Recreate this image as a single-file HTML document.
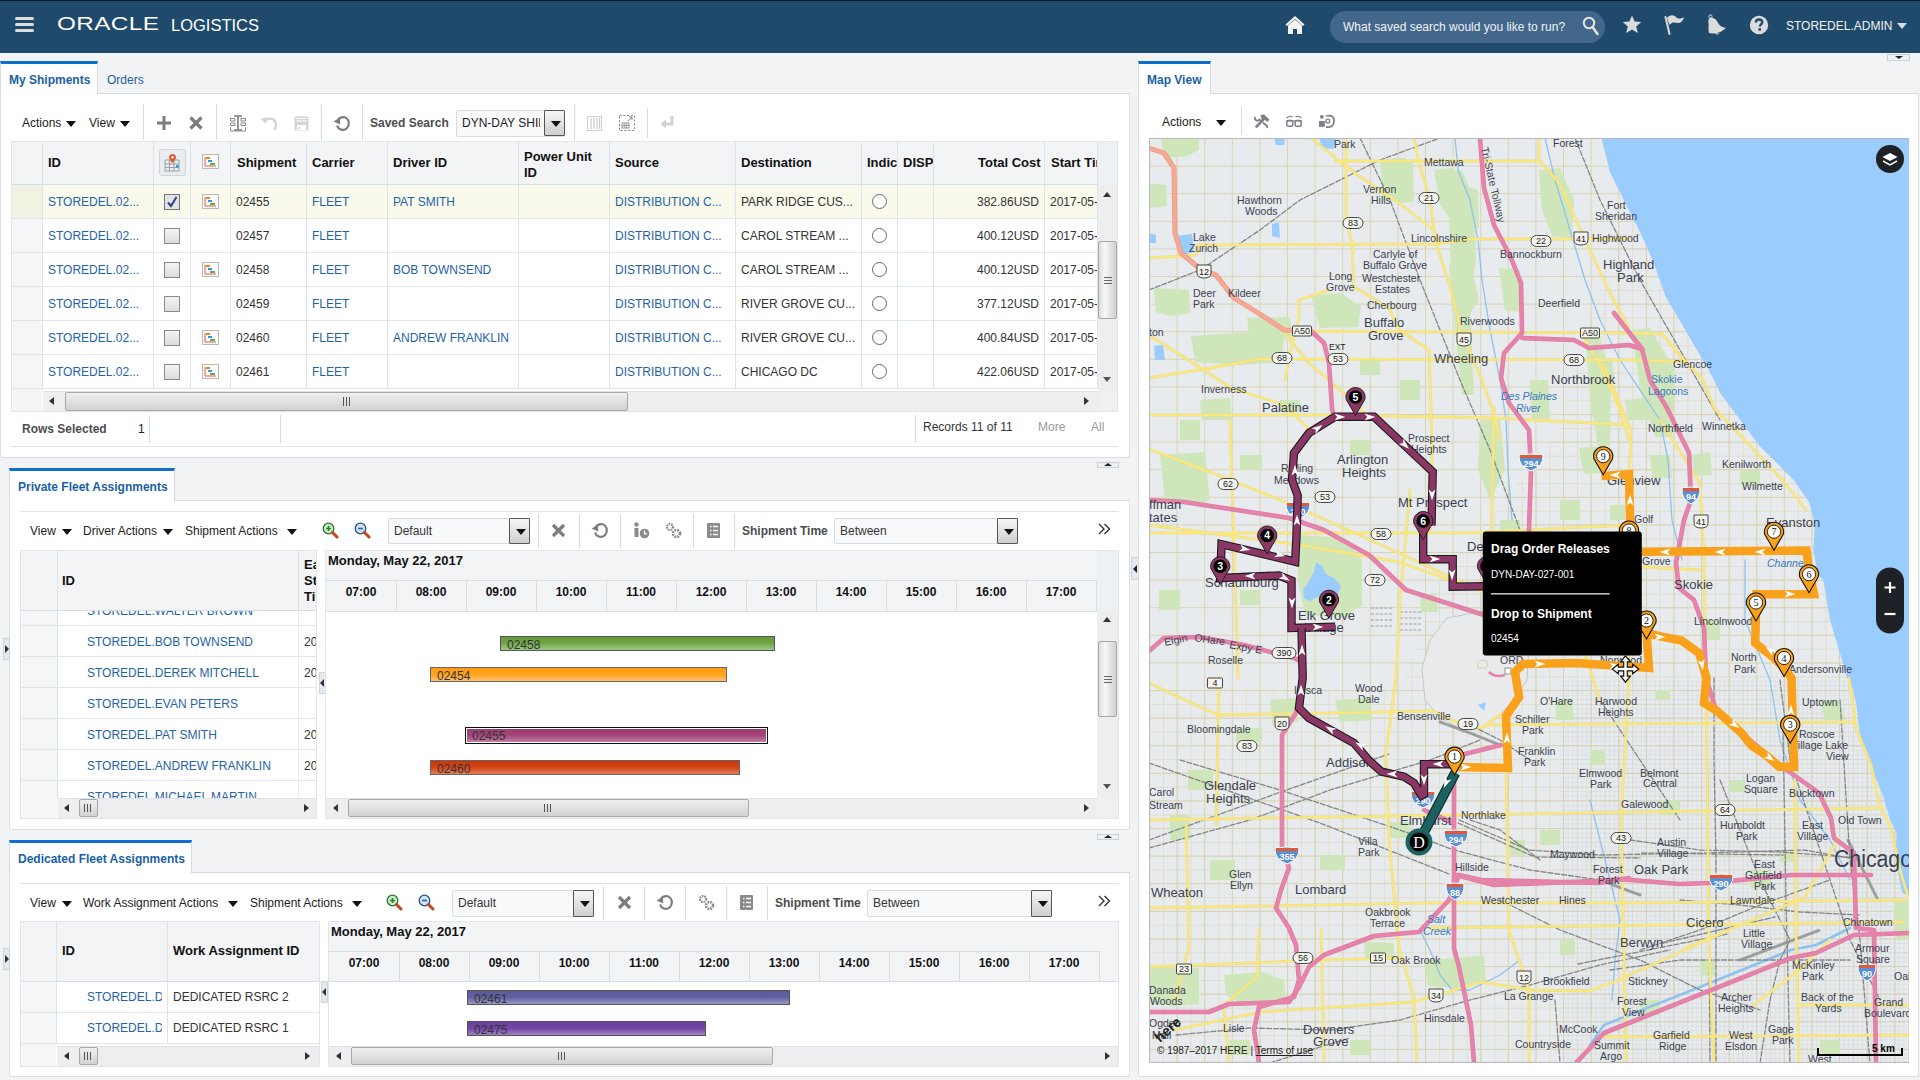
<!DOCTYPE html>
<html><head><meta charset="utf-8">
<style>
*{box-sizing:border-box;margin:0;padding:0}
html,body{width:1920px;height:1080px;overflow:hidden}
body{font-family:"Liberation Sans",sans-serif;font-size:12px;color:#333;background:#f1f3f4;position:relative}
.a{position:absolute}
.t{position:absolute;white-space:nowrap;line-height:14px}
.b{font-weight:bold}
.lnk{color:#1f63a8}
.hdr{left:0;top:0;width:1920px;height:53px;background:#1f4a6c;border-top:1px solid #0d1a26}
.panel{position:absolute;background:#fff;border:1px solid #d9e0e6;border-radius:3px}
.tab{position:absolute;background:#fff;border-left:1px solid #d4dce3;border-right:1px solid #d4dce3;border-top:3px solid #0f6fd0}
.tabt{color:#1a5fa5;font-weight:bold;font-size:12px}
.sep{position:absolute;width:1px;background:#d3dbe2}
.hl{position:absolute;height:1px;background:#dfe6ec}
.vl{position:absolute;width:1px;background:#dfe6ec}
.th{position:absolute;background:#f2f4f6}
.cb{position:absolute;width:15px;height:15px;border:1px solid #8a8a8a;background:linear-gradient(#f4f4f4,#dcdcdc)}
.rad{position:absolute;width:15px;height:15px;border:1.5px solid #666;border-radius:50%;background:#fff}
.dd{position:absolute;border:1px solid #d5dde3;background:#f8f9fa;border-radius:2px}
.ddb{position:absolute;border:1px solid #555;background:linear-gradient(#f6f6f6,#cfcfcf);border-radius:1px}
.ddb:after{content:"";position:absolute;left:6px;top:10px;border-left:5px solid transparent;border-right:5px solid transparent;border-top:6px solid #111}
.car{position:absolute;width:0;height:0;border-left:5px solid transparent;border-right:5px solid transparent;border-top:6px solid #111}
.hs{position:absolute;background:#eceeef;border-top:1px solid #e0e4e7}
.thumb{position:absolute;border:1px solid #a8a8a8;background:linear-gradient(#efefef,#d2d2d2);border-radius:2px}
.gbar{position:absolute;height:15px;border:1px solid #666;font-size:12px;line-height:16px;padding-left:6px;color:#333;overflow:hidden}
.rowh{position:absolute;background:#f3f5f6}
</style></head><body>
<!-- HEADER -->
<div class="a hdr"></div>
<div class="a" style="left:15px;top:17px;width:19px;height:3px;background:#ddd;border-radius:2px"></div>
<div class="a" style="left:15px;top:23px;width:19px;height:3px;background:#ddd;border-radius:2px"></div>
<div class="a" style="left:15px;top:29px;width:19px;height:3px;background:#ddd;border-radius:2px"></div>
<div class="t" style="left:57px;top:15px;font-size:18px;line-height:18px;color:#fff;transform:scaleX(1.35);transform-origin:0 0;letter-spacing:0.3px">ORACLE</div>
<div class="t" style="left:171px;top:16px;font-size:16.5px;line-height:18px;color:#fff">LOGISTICS</div>

<svg class="a" style="left:1284px;top:15px" width="22" height="20" viewBox="0 0 22 20"><path d="M11 1 L1.5 9.5 L3 11 L11 4 L19 11 L20.5 9.5 Z" fill="#f2f2f2"/><path d="M4 10.5 L11 4.5 L18 10.5 V19 H13 V14 H9 V19 H4 Z" fill="#f2f2f2"/></svg>
<div class="a" style="left:1330px;top:11px;width:275px;height:32px;border-radius:16px;background:#43678a"></div>
<div class="t" style="left:1343px;top:19px;font-size:12px;line-height:16px;color:#f0f3f6">What saved search would you like to run?</div>
<svg class="a" style="left:1582px;top:16px" width="18" height="20" viewBox="0 0 18 20"><circle cx="7" cy="7" r="5.2" fill="none" stroke="#e6e6e6" stroke-width="2"/><path d="M10.5 11 L15.5 18" stroke="#e6e6e6" stroke-width="2.4" stroke-linecap="round"/></svg>
<svg class="a" style="left:1622px;top:15px" width="20" height="19" viewBox="0 0 20 19"><path d="M10 0.5 L12.6 6.6 L19.2 7.1 L14.2 11.4 L15.8 18 L10 14.4 L4.2 18 L5.8 11.4 L0.8 7.1 L7.4 6.6 Z" fill="#dcdcdc"/></svg>
<svg class="a" style="left:1664px;top:14px" width="22" height="21" viewBox="0 0 22 21"><path d="M1.5 3 L5.5 20" stroke="#dcdcdc" stroke-width="2" stroke-linecap="round"/><path d="M3 4 C6 0 10 1 12 3 C14 5 17 5 20 3 C19 7 17 9 14 9 C11 9 9 7 5.5 11 Z" fill="#dcdcdc"/></svg>
<svg class="a" style="left:1707px;top:14px" width="21" height="21" viewBox="0 0 21 21"><circle cx="3.5" cy="2.5" r="1.6" fill="none" stroke="#dcdcdc" stroke-width="1"/><path d="M3 4 C6 3 9 5 10.5 8 C12 11 14 13 19 14 L15 17 C12 19 6 20 2 19 C1 15 2 12 1.5 9 C1.2 6 1.5 4.5 3 4 Z" fill="#dcdcdc"/><path d="M8 19 C9 20.5 11 20.5 12 19" stroke="#dcdcdc" fill="none"/></svg>
<svg class="a" style="left:1749px;top:15px" width="20" height="20" viewBox="0 0 20 20"><circle cx="10" cy="10" r="9.2" fill="#dcdcdc"/><path d="M6.8 7.6 C6.8 5.5 8.2 4.5 10 4.5 C12 4.5 13.3 5.7 13.3 7.3 C13.3 9.2 10.8 9.5 10.8 11.6" fill="none" stroke="#1f496d" stroke-width="2.3"/><rect x="9.4" y="13.2" width="2.6" height="2.5" fill="#1f496d"/></svg>
<div class="t" style="left:1786px;top:18px;font-size:12px;line-height:16px;color:#f2f2f2">STOREDEL.ADMIN</div>
<div class="a" style="left:1897px;top:23px;width:0;height:0;border-left:5px solid transparent;border-right:5px solid transparent;border-top:6px solid #dcdcdc"></div>
<div class="panel" style="left:0;top:93px;width:1130px;height:365px;border-top:none"></div>
<div class="hl" style="left:98px;top:93px;width:1032px;background:#d4dce3"></div>
<div class="tab" style="left:0;top:61px;width:98px;height:33px"></div>
<div class="t tabt" style="left:9px;top:73px">My Shipments</div>
<div class="t" style="left:107px;top:73px;color:#1a5fa5">Orders</div>
<div class="t" style="left:22px;top:116px;color:#222">Actions</div><div class="car" style="left:66px;top:121px"></div>
<div class="t" style="left:89px;top:116px;color:#222">View</div><div class="car" style="left:120px;top:121px"></div>
<div class="sep" style="left:143px;top:104px;height:36px"></div>
<div class="sep" style="left:216px;top:104px;height:36px"></div>
<div class="sep" style="left:321px;top:104px;height:36px"></div>
<div class="sep" style="left:362px;top:104px;height:36px"></div>
<svg class="a" style="left:157px;top:116px" width="14" height="14" viewBox="0 0 14 14"><path d="M5.5 0 H8.5 V5.5 H14 V8.5 H8.5 V14 H5.5 V8.5 H0 V5.5 H5.5 Z" fill="#7d7d7d"/></svg>
<svg class="a" style="left:189px;top:116px" width="14" height="14" viewBox="0 0 14 14"><path d="M1.5 1.5 L12.5 12.5 M12.5 1.5 L1.5 12.5" stroke="#7d7d7d" stroke-width="3.2"/></svg>
<svg class="a" style="left:230px;top:115px" width="16" height="17" viewBox="0 0 16 17"><path d="M4 1 H12 M8 1 V15 M4 15 H12" stroke="#7d7d7d" stroke-width="1.6" fill="none"/><path d="M0.5 3.5 H5 V6 H0.5 Z M11 3.5 H15.5 V6 H11 Z M0.5 8 H5 V10.5 H0.5 Z M11 8 H15.5 V10.5 H11 Z M0.5 12.5 V16 H15.5 V12.5" stroke="#8a8a8a" stroke-width="1" fill="none"/></svg>
<svg class="a" style="left:261px;top:116px" width="17" height="15" viewBox="0 0 17 15"><path d="M4 5 C8 1 15 2 15 9 C15 11 14 13 13 14" fill="none" stroke="#d2d2d2" stroke-width="2.2"/><path d="M0 3 L6 1 L5 8 Z" fill="#d2d2d2"/></svg>
<svg class="a" style="left:294px;top:116px" width="15" height="15" viewBox="0 0 15 15"><rect x="0.5" y="0.5" width="14" height="14" rx="1" fill="#d5d5d5"/><rect x="2.5" y="2" width="10" height="1" fill="#fff"/><rect x="2.5" y="4.5" width="10" height="1" fill="#fff"/><rect x="3" y="9" width="9" height="5" fill="#fff"/><rect x="4" y="11" width="2" height="2" fill="#d5d5d5"/></svg>
<svg class="a" style="left:333px;top:115px" width="18" height="17" viewBox="0 0 18 17"><path d="M4.5 5.5 C6 3 8 2.2 10 2.2 C13.5 2.2 15.8 5 15.8 8.5 C15.8 12 13 14.8 9.8 14.8 C7 14.8 4.8 13 4.2 10.5" fill="none" stroke="#7d7d7d" stroke-width="2.2"/><path d="M0.5 6.5 L7 2.8 L7.2 9.5 Z" fill="#7d7d7d"/></svg>
<div class="t b" style="left:370px;top:116px;color:#4d4d4d">Saved Search</div>
<div class="dd" style="left:456px;top:110px;width:109px;height:27px"></div>
<div class="t" style="left:462px;top:116px;color:#222;width:78px;overflow:hidden">DYN-DAY SHIPMENTS</div>
<div class="ddb" style="left:544px;top:110px;width:21px;height:26px"></div>
<div class="sep" style="left:574px;top:104px;height:36px"></div>
<div class="sep" style="left:647px;top:108px;height:30px"></div>
<svg class="a" style="left:587px;top:116px" width="15" height="15" viewBox="0 0 15 15"><rect x="0.5" y="0.5" width="14" height="14" fill="none" stroke="#d0d0d0"/><path d="M4 2 V13 M7 2 V13 M10 2 V13 M12.5 2 V13" stroke="#d0d0d0" stroke-width="1.3"/></svg>
<svg class="a" style="left:619px;top:114px" width="16" height="17" viewBox="0 0 16 17"><rect x="0.5" y="1.5" width="15" height="15" fill="none" stroke="#8a8a8a" stroke-dasharray="2.2 1.6"/><path d="M9 7 L13 3 M10 3 H13 V6" stroke="#8a8a8a" fill="none"/><rect x="3" y="9" width="7" height="5" fill="none" stroke="#8a8a8a" stroke-width="0.9"/><path d="M3 11.5 H10 M5.3 9 V14 M7.6 9 V14" stroke="#8a8a8a" stroke-width="0.8"/></svg>
<svg class="a" style="left:660px;top:115px" width="15" height="15" viewBox="0 0 15 15"><path d="M10.5 1 H13.5 V10.5 H6 V13.5 L0.5 9 L6 4.5 V7.5 H10.5 Z" fill="#d2d2d2"/></svg>
<div class="a" style="left:11px;top:141px;width:1107px;height:271px;border:1px solid #dfe6ec;background:#fff"></div>
<div class="th" style="left:12px;top:142px;width:1086px;height:43px"></div>
<div class="rowh" style="left:12px;top:185px;width:30px;height:226px;background:#f4f6f7"></div>
<div class="a" style="left:12px;top:185px;width:30px;height:33px;background:#f2f2e2"></div>
<div class="a" style="left:42px;top:185px;width:1056px;height:33px;background:#f9f9ec"></div>
<div class="vl" style="left:42px;top:142px;height:247px;background:#dce3e9"></div>
<div class="vl" style="left:153px;top:142px;height:247px;background:#dce3e9"></div>
<div class="vl" style="left:190px;top:142px;height:247px;background:#dce3e9"></div>
<div class="vl" style="left:230px;top:142px;height:247px;background:#dce3e9"></div>
<div class="vl" style="left:306px;top:142px;height:247px;background:#dce3e9"></div>
<div class="vl" style="left:387px;top:142px;height:247px;background:#dce3e9"></div>
<div class="vl" style="left:518px;top:142px;height:247px;background:#dce3e9"></div>
<div class="vl" style="left:609px;top:142px;height:247px;background:#dce3e9"></div>
<div class="vl" style="left:735px;top:142px;height:247px;background:#dce3e9"></div>
<div class="vl" style="left:861px;top:142px;height:247px;background:#dce3e9"></div>
<div class="vl" style="left:897px;top:142px;height:247px;background:#dce3e9"></div>
<div class="vl" style="left:933px;top:142px;height:247px;background:#dce3e9"></div>
<div class="vl" style="left:1044px;top:142px;height:247px;background:#dce3e9"></div>
<div class="vl" style="left:1097px;top:142px;height:247px;background:#dce3e9"></div>
<div class="hl" style="left:12px;top:184px;width:1086px;background:#d6dee5"></div>
<div class="hl" style="left:12px;top:218px;width:1086px"></div>
<div class="hl" style="left:12px;top:252px;width:1086px"></div>
<div class="hl" style="left:12px;top:286px;width:1086px"></div>
<div class="hl" style="left:12px;top:320px;width:1086px"></div>
<div class="hl" style="left:12px;top:354px;width:1086px"></div>
<div class="hl" style="left:12px;top:388px;width:1086px"></div>
<div class="t b" style="left:48px;top:156px;font-size:13px;color:#111">ID</div>
<div class="a" style="left:159px;top:149px;width:27px;height:27px;border:1px solid #cfd5da;border-radius:3px;background:#e9edf0"></div>
<svg class="a" style="left:164px;top:153px" width="17" height="19" viewBox="0 0 17 19"><path d="M1 7 H15 V18 H1 Z M1 11 H15 M1 14.5 H15 M5.5 7 V18 M10 7 V18" stroke="#9aa0a6" stroke-width="1" fill="none"/><path d="M8.5 1 C6.3 1 5 2.5 5 4.2 C5 6.5 8.5 10 8.5 10 C8.5 10 12 6.5 12 4.2 C12 2.5 10.7 1 8.5 1 Z" fill="#e2582e"/><circle cx="8.5" cy="4.2" r="1.2" fill="#fff"/><rect x="12" y="12" width="2.5" height="2.5" fill="#2a9be0"/></svg>
<svg class="a" style="left:202px;top:154px" width="17" height="15" viewBox="0 0 17 15"><rect x="0.5" y="0.5" width="16" height="14" fill="#fafafa" stroke="#b9b9b9"/><path d="M3 3 V12 H14" fill="none" stroke="#e25a3c" stroke-width="1"/><rect x="4" y="3" width="4" height="2" fill="#e08a1e"/><rect x="6" y="6" width="4" height="2" fill="#2a9be0"/><rect x="8" y="9" width="5" height="2" fill="#6aa84f"/></svg>
<div class="t b" style="left:237px;top:156px;font-size:13px;color:#111">Shipment</div>
<div class="t b" style="left:312px;top:156px;font-size:13px;color:#111">Carrier</div>
<div class="t b" style="left:393px;top:156px;font-size:13px;color:#111">Driver ID</div>
<div class="t b" style="left:524px;top:149px;font-size:13px;color:#111;line-height:16px">Power Unit<br>ID</div>
<div class="t b" style="left:615px;top:156px;font-size:13px;color:#111">Source</div>
<div class="t b" style="left:741px;top:156px;font-size:13px;color:#111">Destination</div>
<div class="t b" style="left:867px;top:156px;font-size:13px;color:#111;width:30px;overflow:hidden">Indicator</div>
<div class="t b" style="left:903px;top:156px;font-size:13px;color:#111;width:30px;overflow:hidden">DISP</div>
<div class="t b" style="left:978px;top:156px;font-size:13px;color:#111">Total Cost</div>
<div class="t b" style="left:1051px;top:156px;font-size:13px;color:#111;width:46px;overflow:hidden">Start Time</div>
<div class="t lnk" style="left:48px;top:195px">STOREDEL.02...</div>
<svg class="a" style="left:164px;top:194px" width="16" height="16" viewBox="0 0 16 16"><rect x="0.5" y="0.5" width="15" height="15" fill="#e3e3e3" stroke="#777"/><path d="M4 8.5 L7 12 L12.5 3" fill="none" stroke="#2b3f8f" stroke-width="2"/></svg>
<svg class="a" style="left:202px;top:194px" width="17" height="15" viewBox="0 0 17 15"><rect x="0.5" y="0.5" width="16" height="14" fill="#fafafa" stroke="#b9b9b9"/><path d="M3 3 V12 H14" fill="none" stroke="#e25a3c" stroke-width="1"/><rect x="4" y="3" width="4" height="2" fill="#e08a1e"/><rect x="6" y="6" width="4" height="2" fill="#2a9be0"/><rect x="8" y="9" width="5" height="2" fill="#6aa84f"/></svg>
<div class="t" style="left:236px;top:195px;color:#333">02455</div>
<div class="t lnk" style="left:312px;top:195px">FLEET</div>
<div class="t lnk" style="left:393px;top:195px">PAT SMITH</div>
<div class="t lnk" style="left:615px;top:195px">DISTRIBUTION C...</div>
<div class="t" style="left:741px;top:195px;color:#333">PARK RIDGE CUS...</div>
<div class="rad" style="left:872px;top:194px;width:15px;height:15px"></div>
<div class="t" style="left:973px;top:195px;color:#333;width:66px;text-align:right">382.86USD</div>
<div class="t" style="left:1050px;top:195px;color:#333;width:47px;overflow:hidden">2017-05-22</div>
<div class="t lnk" style="left:48px;top:229px">STOREDEL.02...</div>
<div class="cb" style="left:164px;top:228px;width:16px;height:16px"></div>
<div class="t" style="left:236px;top:229px;color:#333">02457</div>
<div class="t lnk" style="left:312px;top:229px">FLEET</div>
<div class="t lnk" style="left:615px;top:229px">DISTRIBUTION C...</div>
<div class="t" style="left:741px;top:229px;color:#333">CAROL STREAM ...</div>
<div class="rad" style="left:872px;top:228px;width:15px;height:15px"></div>
<div class="t" style="left:973px;top:229px;color:#333;width:66px;text-align:right">400.12USD</div>
<div class="t" style="left:1050px;top:229px;color:#333;width:47px;overflow:hidden">2017-05-22</div>
<div class="t lnk" style="left:48px;top:263px">STOREDEL.02...</div>
<div class="cb" style="left:164px;top:262px;width:16px;height:16px"></div>
<svg class="a" style="left:202px;top:262px" width="17" height="15" viewBox="0 0 17 15"><rect x="0.5" y="0.5" width="16" height="14" fill="#fafafa" stroke="#b9b9b9"/><path d="M3 3 V12 H14" fill="none" stroke="#e25a3c" stroke-width="1"/><rect x="4" y="3" width="4" height="2" fill="#e08a1e"/><rect x="6" y="6" width="4" height="2" fill="#2a9be0"/><rect x="8" y="9" width="5" height="2" fill="#6aa84f"/></svg>
<div class="t" style="left:236px;top:263px;color:#333">02458</div>
<div class="t lnk" style="left:312px;top:263px">FLEET</div>
<div class="t lnk" style="left:393px;top:263px">BOB TOWNSEND</div>
<div class="t lnk" style="left:615px;top:263px">DISTRIBUTION C...</div>
<div class="t" style="left:741px;top:263px;color:#333">CAROL STREAM ...</div>
<div class="rad" style="left:872px;top:262px;width:15px;height:15px"></div>
<div class="t" style="left:973px;top:263px;color:#333;width:66px;text-align:right">400.12USD</div>
<div class="t" style="left:1050px;top:263px;color:#333;width:47px;overflow:hidden">2017-05-22</div>
<div class="t lnk" style="left:48px;top:297px">STOREDEL.02...</div>
<div class="cb" style="left:164px;top:296px;width:16px;height:16px"></div>
<div class="t" style="left:236px;top:297px;color:#333">02459</div>
<div class="t lnk" style="left:312px;top:297px">FLEET</div>
<div class="t lnk" style="left:615px;top:297px">DISTRIBUTION C...</div>
<div class="t" style="left:741px;top:297px;color:#333">RIVER GROVE CU...</div>
<div class="rad" style="left:872px;top:296px;width:15px;height:15px"></div>
<div class="t" style="left:973px;top:297px;color:#333;width:66px;text-align:right">377.12USD</div>
<div class="t" style="left:1050px;top:297px;color:#333;width:47px;overflow:hidden">2017-05-22</div>
<div class="t lnk" style="left:48px;top:331px">STOREDEL.02...</div>
<div class="cb" style="left:164px;top:330px;width:16px;height:16px"></div>
<svg class="a" style="left:202px;top:330px" width="17" height="15" viewBox="0 0 17 15"><rect x="0.5" y="0.5" width="16" height="14" fill="#fafafa" stroke="#b9b9b9"/><path d="M3 3 V12 H14" fill="none" stroke="#e25a3c" stroke-width="1"/><rect x="4" y="3" width="4" height="2" fill="#e08a1e"/><rect x="6" y="6" width="4" height="2" fill="#2a9be0"/><rect x="8" y="9" width="5" height="2" fill="#6aa84f"/></svg>
<div class="t" style="left:236px;top:331px;color:#333">02460</div>
<div class="t lnk" style="left:312px;top:331px">FLEET</div>
<div class="t lnk" style="left:393px;top:331px">ANDREW FRANKLIN</div>
<div class="t lnk" style="left:615px;top:331px">DISTRIBUTION C...</div>
<div class="t" style="left:741px;top:331px;color:#333">RIVER GROVE CU...</div>
<div class="rad" style="left:872px;top:330px;width:15px;height:15px"></div>
<div class="t" style="left:973px;top:331px;color:#333;width:66px;text-align:right">400.84USD</div>
<div class="t" style="left:1050px;top:331px;color:#333;width:47px;overflow:hidden">2017-05-22</div>
<div class="t lnk" style="left:48px;top:365px">STOREDEL.02...</div>
<div class="cb" style="left:164px;top:364px;width:16px;height:16px"></div>
<svg class="a" style="left:202px;top:364px" width="17" height="15" viewBox="0 0 17 15"><rect x="0.5" y="0.5" width="16" height="14" fill="#fafafa" stroke="#b9b9b9"/><path d="M3 3 V12 H14" fill="none" stroke="#e25a3c" stroke-width="1"/><rect x="4" y="3" width="4" height="2" fill="#e08a1e"/><rect x="6" y="6" width="4" height="2" fill="#2a9be0"/><rect x="8" y="9" width="5" height="2" fill="#6aa84f"/></svg>
<div class="t" style="left:236px;top:365px;color:#333">02461</div>
<div class="t lnk" style="left:312px;top:365px">FLEET</div>
<div class="t lnk" style="left:615px;top:365px">DISTRIBUTION C...</div>
<div class="t" style="left:741px;top:365px;color:#333">CHICAGO DC</div>
<div class="rad" style="left:872px;top:364px;width:15px;height:15px"></div>
<div class="t" style="left:973px;top:365px;color:#333;width:66px;text-align:right">422.06USD</div>
<div class="t" style="left:1050px;top:365px;color:#333;width:47px;overflow:hidden">2017-05-22</div>
<div class="a" style="left:1098px;top:142px;width:19px;height:43px;background:#eef1f3"></div>
<div class="a" style="left:1098px;top:185px;width:19px;height:205px;background:#eceeef"></div>
<div class="a" style="left:1103px;top:192px;width:0;height:0;border-left:4px solid transparent;border-right:4px solid transparent;border-bottom:5px solid #333"></div>
<div class="a" style="left:1103px;top:377px;width:0;height:0;border-left:4px solid transparent;border-right:4px solid transparent;border-top:5px solid #555"></div>
<div class="thumb" style="left:1098px;top:241px;width:19px;height:78px;background:linear-gradient(to right,#dcdcdc,#f8f8f8 35%,#d0d0d0)"></div><div class="a" style="left:1098px;top:390px;width:19px;height:21px;background:#eef0f1"></div>
<div class="a" style="left:1104px;top:277px;width:8px;height:1px;background:#666;box-shadow:0 3px 0 #666,0 6px 0 #666"></div>
<div class="a" style="left:12px;top:389px;width:30px;height:22px;background:#f3f5f6"></div>
<div class="hs" style="left:43px;top:391px;width:1055px;height:20px"></div>
<div class="a" style="left:49px;top:397px;width:0;height:0;border-top:4px solid transparent;border-bottom:4px solid transparent;border-right:5px solid #333"></div>
<div class="a" style="left:1084px;top:397px;width:0;height:0;border-top:4px solid transparent;border-bottom:4px solid transparent;border-left:5px solid #333"></div>
<div class="thumb" style="left:65px;top:392px;width:563px;height:19px"></div>
<div class="a" style="left:343px;top:397px;width:1px;height:9px;background:#555;box-shadow:3px 0 0 #555,6px 0 0 #555"></div>
<div class="t b" style="left:22px;top:422px;color:#4d4d4d">Rows Selected</div>
<div class="t" style="left:138px;top:422px;color:#222">1</div>
<div class="sep" style="left:149px;top:415px;height:28px"></div>
<div class="sep" style="left:280px;top:415px;height:28px"></div>
<div class="sep" style="left:915px;top:415px;height:28px"></div>
<div class="hl" style="left:11px;top:446px;width:1107px;background:#dde4ea"></div>
<div class="t" style="left:923px;top:420px;color:#333">Records 11 of 11</div>
<div class="t" style="left:1038px;top:420px;color:#9a9a9a">More</div>
<div class="t" style="left:1091px;top:420px;color:#9a9a9a">All</div>
<div class="panel" style="left:9px;top:500px;width:1121px;height:330px;border-top:none"></div>
<div class="hl" style="left:175px;top:500px;width:955px;background:#d4dce3"></div>
<div class="tab" style="left:9px;top:468px;width:166px;height:33px"></div>
<div class="t tabt" style="left:18px;top:480px">Private Fleet Assignments</div>
<div class="hl" style="left:20px;top:511px;width:1099px;background:#dde4ea"></div>
<div class="t" style="left:30px;top:524px;color:#222">View</div><div class="car" style="left:62px;top:529px"></div>
<div class="t" style="left:83px;top:524px;color:#222">Driver Actions</div><div class="car" style="left:163px;top:529px"></div>
<div class="t" style="left:185px;top:524px;color:#222">Shipment Actions</div><div class="car" style="left:287px;top:529px"></div>
<svg class="a" style="left:322px;top:522px" width="17" height="17" viewBox="0 0 17 17"><circle cx="6.5" cy="6.5" r="5.3" fill="#cdeccd" stroke="#2f6f2f" stroke-width="1.3"/><path d="M4 6.5 H9 M6.5 4 V9" stroke="#1a8a1a" stroke-width="1.6"/><path d="M10.5 10.5 L15 15" stroke="#c2461f" stroke-width="3" stroke-linecap="round"/></svg>
<svg class="a" style="left:354px;top:522px" width="17" height="17" viewBox="0 0 17 17"><circle cx="6.5" cy="6.5" r="5.3" fill="#cfe3f3" stroke="#2f4f7f" stroke-width="1.3"/><path d="M4 6.5 H9" stroke="#1a6fb0" stroke-width="1.6"/><path d="M10.5 10.5 L15 15" stroke="#c2461f" stroke-width="3" stroke-linecap="round"/></svg>
<div class="dd" style="left:388px;top:518px;width:142px;height:26px"></div>
<div class="t" style="left:394px;top:524px;color:#333">Default</div>
<div class="ddb" style="left:509px;top:518px;width:21px;height:26px"></div>
<div class="sep" style="left:538px;top:514px;height:34px"></div>
<div class="sep" style="left:579px;top:514px;height:34px"></div>
<div class="sep" style="left:620px;top:514px;height:34px"></div>
<div class="sep" style="left:693px;top:514px;height:34px"></div>
<div class="sep" style="left:734px;top:514px;height:34px"></div>
<svg class="a" style="left:551px;top:523px" width="15" height="15" viewBox="0 0 15 15"><path d="M2 2 L13 13 M13 2 L2 13" stroke="#7d7d7d" stroke-width="3.2"/></svg>
<svg class="a" style="left:591px;top:522px" width="18" height="17" viewBox="0 0 18 17"><path d="M4.5 5.5 C6 3 8 2.2 10 2.2 C13.5 2.2 15.8 5 15.8 8.5 C15.8 12 13 14.8 9.8 14.8 C7 14.8 4.8 13 4.2 10.5" fill="none" stroke="#7d7d7d" stroke-width="2.2"/><path d="M0.5 6.5 L7 2.8 L7.2 9.5 Z" fill="#7d7d7d"/></svg>
<svg class="a" style="left:633px;top:522px" width="17" height="17" viewBox="0 0 17 17"><circle cx="3.5" cy="2.5" r="2.2" fill="#8a8a8a"/><rect x="1.5" y="6" width="4" height="9" fill="#8a8a8a"/><circle cx="11.5" cy="11.5" r="4.8" fill="#8a8a8a"/><path d="M11.5 8.5 V11.8 H14" stroke="#fff" stroke-width="1.3" fill="none"/></svg>
<svg class="a" style="left:665px;top:522px" width="17" height="17" viewBox="0 0 17 17"><circle cx="5" cy="5" r="3" fill="none" stroke="#8a8a8a" stroke-width="2.2" stroke-dasharray="1.6 0.9"/><circle cx="11.5" cy="11.5" r="3.5" fill="none" stroke="#8a8a8a" stroke-width="2.6" stroke-dasharray="1.8 1"/></svg>
<svg class="a" style="left:707px;top:523px" width="13" height="15" viewBox="0 0 13 15"><rect x="0" y="0" width="13" height="15" rx="1" fill="#8a8a8a"/><path d="M3 3.5 H4.5 M6 3.5 H11 M3 7.5 H4.5 M6 7.5 H11 M3 11.5 H4.5 M6 11.5 H11" stroke="#fff" stroke-width="1.5"/></svg>
<div class="t b" style="left:742px;top:524px;color:#4d4d4d">Shipment Time</div>
<div class="dd" style="left:834px;top:518px;width:184px;height:26px"></div>
<div class="t" style="left:840px;top:524px;color:#333">Between</div>
<div class="ddb" style="left:997px;top:518px;width:21px;height:26px"></div>
<svg class="a" style="left:1098px;top:523px" width="13" height="12" viewBox="0 0 13 12"><path d="M1 1 L6 6 L1 11 M6.5 1 L11.5 6 L6.5 11" fill="none" stroke="#333" stroke-width="1.4"/></svg>
<div class="a" style="left:20px;top:550px;width:297px;height:269px;border:1px solid #dfe6ec;background:#fff"></div>
<div class="th" style="left:21px;top:551px;width:295px;height:59px"></div>
<div class="rowh" style="left:21px;top:610px;width:36px;height:208px;background:#f4f6f7"></div>
<div class="vl" style="left:57px;top:551px;height:247px;background:#dce3e9"></div>
<div class="vl" style="left:298px;top:551px;height:247px;background:#dce3e9"></div>
<div class="hl" style="left:21px;top:610px;width:295px;background:#d6dee5"></div>
<div class="t b" style="left:62px;top:574px;font-size:13px;color:#111">ID</div>
<div class="a" style="left:303px;top:557px;width:13px;height:50px;overflow:hidden"><div class="t b" style="left:1px;top:0;font-size:13px;line-height:16px;color:#111">Ea<br>St<br>Ti</div></div>
<div class="a" style="left:58px;top:611px;width:258px;height:187px;overflow:hidden">
<div class="t lnk" style="left:29px;top:-7px">STOREDEL.WALTER BROWN</div>
<div class="hl" style="left:0;top:14px;width:258px"></div>
<div class="t lnk" style="left:29px;top:24px">STOREDEL.BOB TOWNSEND</div>
<div class="t" style="left:246px;top:24px;color:#333">20</div>
<div class="hl" style="left:0;top:45px;width:258px"></div>
<div class="t lnk" style="left:29px;top:55px">STOREDEL.DEREK MITCHELL</div>
<div class="t" style="left:246px;top:55px;color:#333">20</div>
<div class="hl" style="left:0;top:76px;width:258px"></div>
<div class="t lnk" style="left:29px;top:86px">STOREDEL.EVAN PETERS</div>
<div class="hl" style="left:0;top:107px;width:258px"></div>
<div class="t lnk" style="left:29px;top:117px">STOREDEL.PAT SMITH</div>
<div class="t" style="left:246px;top:117px;color:#333">20</div>
<div class="hl" style="left:0;top:138px;width:258px"></div>
<div class="t lnk" style="left:29px;top:148px">STOREDEL.ANDREW FRANKLIN</div>
<div class="t" style="left:246px;top:148px;color:#333">20</div>
<div class="hl" style="left:0;top:169px;width:258px"></div>
<div class="t lnk" style="left:29px;top:179px">STOREDEL.MICHAEL MARTIN</div>
<div class="hl" style="left:0;top:200px;width:258px"></div>
</div>
<div class="hl" style="left:21px;top:625px;width:36px;background:#e1e6ea"></div>
<div class="hl" style="left:21px;top:656px;width:36px;background:#e1e6ea"></div>
<div class="hl" style="left:21px;top:687px;width:36px;background:#e1e6ea"></div>
<div class="hl" style="left:21px;top:718px;width:36px;background:#e1e6ea"></div>
<div class="hl" style="left:21px;top:749px;width:36px;background:#e1e6ea"></div>
<div class="hl" style="left:21px;top:780px;width:36px;background:#e1e6ea"></div>
<div class="vl" style="left:298px;top:611px;height:187px;background:#e6ebef"></div>
<div class="hs" style="left:58px;top:798px;width:258px;height:20px"></div>
<div class="a" style="left:64px;top:804px;width:0;height:0;border-top:4px solid transparent;border-bottom:4px solid transparent;border-right:5px solid #333"></div>
<div class="a" style="left:304px;top:804px;width:0;height:0;border-top:4px solid transparent;border-bottom:4px solid transparent;border-left:5px solid #333"></div>
<div class="thumb" style="left:79px;top:799px;width:19px;height:18px"></div>
<div class="a" style="left:84px;top:804px;width:1px;height:8px;background:#555;box-shadow:3px 0 0 #555,6px 0 0 #555"></div>
<div class="a" style="left:319px;top:672px;width:7px;height:22px;background:#e6eaee;border:1px solid #cdd5dc"></div>
<div class="a" style="left:320px;top:679px;width:0;height:0;border-top:4px solid transparent;border-bottom:4px solid transparent;border-right:4px solid #333"></div>
<div class="a" style="left:325px;top:550px;width:794px;height:269px;border:1px solid #dfe6ec;background:#fff"></div>
<div class="th" style="left:326px;top:551px;width:792px;height:60px"></div>
<div class="t b" style="left:328px;top:554px;font-size:13px;color:#111">Monday, May 22, 2017</div>
<div class="hl" style="left:326px;top:580px;width:771px;background:#d6dee5"></div>
<div class="hl" style="left:326px;top:611px;width:771px;background:#d6dee5"></div>
<div class="vl" style="left:396px;top:581px;height:30px;background:#d6dee5"></div>
<div class="t b" style="left:326px;top:585px;width:70px;text-align:center;color:#111">07:00</div>
<div class="vl" style="left:466px;top:581px;height:30px;background:#d6dee5"></div>
<div class="t b" style="left:396px;top:585px;width:70px;text-align:center;color:#111">08:00</div>
<div class="vl" style="left:536px;top:581px;height:30px;background:#d6dee5"></div>
<div class="t b" style="left:466px;top:585px;width:70px;text-align:center;color:#111">09:00</div>
<div class="vl" style="left:606px;top:581px;height:30px;background:#d6dee5"></div>
<div class="t b" style="left:536px;top:585px;width:70px;text-align:center;color:#111">10:00</div>
<div class="vl" style="left:676px;top:581px;height:30px;background:#d6dee5"></div>
<div class="t b" style="left:606px;top:585px;width:70px;text-align:center;color:#111">11:00</div>
<div class="vl" style="left:746px;top:581px;height:30px;background:#d6dee5"></div>
<div class="t b" style="left:676px;top:585px;width:70px;text-align:center;color:#111">12:00</div>
<div class="vl" style="left:816px;top:581px;height:30px;background:#d6dee5"></div>
<div class="t b" style="left:746px;top:585px;width:70px;text-align:center;color:#111">13:00</div>
<div class="vl" style="left:886px;top:581px;height:30px;background:#d6dee5"></div>
<div class="t b" style="left:816px;top:585px;width:70px;text-align:center;color:#111">14:00</div>
<div class="vl" style="left:956px;top:581px;height:30px;background:#d6dee5"></div>
<div class="t b" style="left:886px;top:585px;width:70px;text-align:center;color:#111">15:00</div>
<div class="vl" style="left:1026px;top:581px;height:30px;background:#d6dee5"></div>
<div class="t b" style="left:956px;top:585px;width:70px;text-align:center;color:#111">16:00</div>
<div class="vl" style="left:1096px;top:581px;height:30px;background:#d6dee5"></div>
<div class="t b" style="left:1026px;top:585px;width:70px;text-align:center;color:#111">17:00</div>
<div class="a" style="left:1097px;top:551px;width:21px;height:60px;background:#eef1f3"></div>
<div class="a" style="left:1097px;top:611px;width:21px;height:187px;background:#eceeef"></div>
<div class="a" style="left:1103px;top:617px;width:0;height:0;border-left:4px solid transparent;border-right:4px solid transparent;border-bottom:5px solid #333"></div>
<div class="a" style="left:1103px;top:784px;width:0;height:0;border-left:4px solid transparent;border-right:4px solid transparent;border-top:5px solid #555"></div>
<div class="thumb" style="left:1098px;top:641px;width:19px;height:76px;background:linear-gradient(to right,#dcdcdc,#f8f8f8 35%,#d0d0d0)"></div><div class="a" style="left:1097px;top:798px;width:21px;height:20px;background:#eef0f1"></div>
<div class="a" style="left:1104px;top:676px;width:8px;height:1px;background:#666;box-shadow:0 3px 0 #666,0 6px 0 #666"></div>
<div class="hs" style="left:326px;top:798px;width:771px;height:20px"></div>
<div class="a" style="left:333px;top:804px;width:0;height:0;border-top:4px solid transparent;border-bottom:4px solid transparent;border-right:5px solid #333"></div>
<div class="a" style="left:1084px;top:804px;width:0;height:0;border-top:4px solid transparent;border-bottom:4px solid transparent;border-left:5px solid #333"></div>
<div class="thumb" style="left:348px;top:799px;width:401px;height:18px"></div>
<div class="a" style="left:544px;top:804px;width:1px;height:8px;background:#555;box-shadow:3px 0 0 #555,6px 0 0 #555"></div>
<div class="gbar" style="left:500px;top:636px;width:275px;background:linear-gradient(#649c3a,#6ea445 45%,#9fc786);border-color:#555">02458</div>
<div class="gbar" style="left:430px;top:667px;width:297px;background:linear-gradient(#ff9a0e,#ffa41e 50%,#ffc06e);border-color:#666">02454</div>
<div class="gbar" style="left:430px;top:760px;width:310px;background:linear-gradient(#c93608,#d24618 50%,#e57d5c);border-color:#666">02460</div>
<div class="gbar" style="left:465px;top:727px;width:303px;height:17px;border:1.5px solid #111;box-shadow:inset 0 0 0 1px #fff;background:linear-gradient(#9a3a6e,#a2477a 50%,#c88aae);line-height:16px;padding-left:6px">02455</div>
<div class="a" style="left:3px;top:638px;width:7px;height:22px;background:#e6eaee;border:1px solid #cdd5dc"></div>
<div class="a" style="left:5px;top:645px;width:0;height:0;border-top:4px solid transparent;border-bottom:4px solid transparent;border-left:4px solid #333"></div>
<div class="a" style="left:1097px;top:462px;width:22px;height:6px;border:1px solid #c9d1d8;background:#eef1f3"></div><div class="a" style="left:1104px;top:463px;width:0;height:0;border-left:4px solid transparent;border-right:4px solid transparent;border-bottom:3px solid #222"></div>
<div class="a" style="left:1097px;top:834px;width:22px;height:6px;border:1px solid #c9d1d8;background:#eef1f3"></div><div class="a" style="left:1104px;top:835px;width:0;height:0;border-left:4px solid transparent;border-right:4px solid transparent;border-bottom:3px solid #222"></div>
<div class="a" style="left:1131px;top:557px;width:8px;height:23px;background:#e6eaee;border:1px solid #cdd5dc"></div><div class="a" style="left:1133px;top:565px;width:0;height:0;border-top:4px solid transparent;border-bottom:4px solid transparent;border-right:4px solid #222"></div>
<div class="panel" style="left:9px;top:872px;width:1121px;height:205px;border-top:none"></div>
<div class="hl" style="left:192px;top:872px;width:938px;background:#d4dce3"></div>
<div class="tab" style="left:9px;top:840px;width:183px;height:33px"></div>
<div class="t tabt" style="left:18px;top:852px">Dedicated Fleet Assignments</div>
<div class="hl" style="left:20px;top:883px;width:1099px;background:#dde4ea"></div>
<div class="t" style="left:30px;top:896px;color:#222">View</div><div class="car" style="left:62px;top:901px"></div>
<div class="t" style="left:83px;top:896px;color:#222">Work Assignment Actions</div><div class="car" style="left:228px;top:901px"></div>
<div class="t" style="left:250px;top:896px;color:#222">Shipment Actions</div><div class="car" style="left:352px;top:901px"></div>
<svg class="a" style="left:386px;top:894px" width="17" height="17" viewBox="0 0 17 17"><circle cx="6.5" cy="6.5" r="5.3" fill="#cdeccd" stroke="#2f6f2f" stroke-width="1.3"/><path d="M4 6.5 H9 M6.5 4 V9" stroke="#1a8a1a" stroke-width="1.6"/><path d="M10.5 10.5 L15 15" stroke="#c2461f" stroke-width="3" stroke-linecap="round"/></svg>
<svg class="a" style="left:418px;top:894px" width="17" height="17" viewBox="0 0 17 17"><circle cx="6.5" cy="6.5" r="5.3" fill="#cfe3f3" stroke="#2f4f7f" stroke-width="1.3"/><path d="M4 6.5 H9" stroke="#1a6fb0" stroke-width="1.6"/><path d="M10.5 10.5 L15 15" stroke="#c2461f" stroke-width="3" stroke-linecap="round"/></svg>
<div class="dd" style="left:452px;top:890px;width:142px;height:27px"></div>
<div class="t" style="left:458px;top:896px;color:#333">Default</div>
<div class="ddb" style="left:573px;top:890px;width:21px;height:27px"></div>
<div class="sep" style="left:603px;top:886px;height:34px"></div>
<div class="sep" style="left:644px;top:886px;height:34px"></div>
<div class="sep" style="left:685px;top:886px;height:34px"></div>
<div class="sep" style="left:726px;top:886px;height:34px"></div>
<div class="sep" style="left:767px;top:886px;height:34px"></div>
<svg class="a" style="left:617px;top:895px" width="15" height="15" viewBox="0 0 15 15"><path d="M2 2 L13 13 M13 2 L2 13" stroke="#7d7d7d" stroke-width="3.2"/></svg>
<svg class="a" style="left:656px;top:894px" width="18" height="17" viewBox="0 0 18 17"><path d="M4.5 5.5 C6 3 8 2.2 10 2.2 C13.5 2.2 15.8 5 15.8 8.5 C15.8 12 13 14.8 9.8 14.8 C7 14.8 4.8 13 4.2 10.5" fill="none" stroke="#7d7d7d" stroke-width="2.2"/><path d="M0.5 6.5 L7 2.8 L7.2 9.5 Z" fill="#7d7d7d"/></svg>
<svg class="a" style="left:698px;top:894px" width="17" height="17" viewBox="0 0 17 17"><circle cx="5" cy="5" r="3" fill="none" stroke="#8a8a8a" stroke-width="2.2" stroke-dasharray="1.6 0.9"/><circle cx="11.5" cy="11.5" r="3.5" fill="none" stroke="#8a8a8a" stroke-width="2.6" stroke-dasharray="1.8 1"/></svg>
<svg class="a" style="left:740px;top:895px" width="13" height="15" viewBox="0 0 13 15"><rect x="0" y="0" width="13" height="15" rx="1" fill="#8a8a8a"/><path d="M3 3.5 H4.5 M6 3.5 H11 M3 7.5 H4.5 M6 7.5 H11 M3 11.5 H4.5 M6 11.5 H11" stroke="#fff" stroke-width="1.5"/></svg>
<div class="t b" style="left:775px;top:896px;color:#4d4d4d">Shipment Time</div>
<div class="dd" style="left:867px;top:890px;width:185px;height:27px"></div>
<div class="t" style="left:873px;top:896px;color:#333">Between</div>
<div class="ddb" style="left:1031px;top:890px;width:21px;height:27px"></div>
<svg class="a" style="left:1098px;top:895px" width="13" height="12" viewBox="0 0 13 12"><path d="M1 1 L6 6 L1 11 M6.5 1 L11.5 6 L6.5 11" fill="none" stroke="#333" stroke-width="1.4"/></svg>
<div class="a" style="left:20px;top:921px;width:300px;height:146px;border:1px solid #dfe6ec;background:#fff"></div>
<div class="th" style="left:21px;top:922px;width:298px;height:59px"></div>
<div class="rowh" style="left:21px;top:981px;width:35px;height:85px;background:#f4f6f7"></div>
<div class="vl" style="left:56px;top:922px;height:122px;background:#dce3e9"></div>
<div class="vl" style="left:167px;top:922px;height:122px;background:#dce3e9"></div>
<div class="hl" style="left:21px;top:981px;width:298px;background:#d6dee5"></div>
<div class="hl" style="left:21px;top:1012px;width:298px"></div>
<div class="hl" style="left:21px;top:1043px;width:298px"></div>
<div class="t b" style="left:62px;top:944px;font-size:13px;color:#111">ID</div>
<div class="t b" style="left:173px;top:944px;font-size:13px;color:#111">Work Assignment ID</div>
<div class="a" style="left:57px;top:982px;width:105px;height:60px;overflow:hidden"><div class="t lnk" style="left:30px;top:8px">STOREDEL.DEDICATED</div><div class="t lnk" style="left:30px;top:39px">STOREDEL.DEDICATED</div></div>
<div class="t" style="left:173px;top:990px;color:#333">DEDICATED RSRC 2</div>
<div class="t" style="left:173px;top:1021px;color:#333">DEDICATED RSRC 1</div>
<div class="hs" style="left:57px;top:1046px;width:262px;height:20px"></div>
<div class="a" style="left:64px;top:1052px;width:0;height:0;border-top:4px solid transparent;border-bottom:4px solid transparent;border-right:5px solid #333"></div>
<div class="a" style="left:305px;top:1052px;width:0;height:0;border-top:4px solid transparent;border-bottom:4px solid transparent;border-left:5px solid #333"></div>
<div class="thumb" style="left:79px;top:1047px;width:19px;height:18px"></div>
<div class="a" style="left:84px;top:1052px;width:1px;height:8px;background:#555;box-shadow:3px 0 0 #555,6px 0 0 #555"></div>
<div class="a" style="left:321px;top:981px;width:7px;height:22px;background:#e6eaee;border:1px solid #cdd5dc"></div>
<div class="a" style="left:322px;top:988px;width:0;height:0;border-top:4px solid transparent;border-bottom:4px solid transparent;border-right:4px solid #333"></div>
<div class="a" style="left:3px;top:948px;width:7px;height:22px;background:#e6eaee;border:1px solid #cdd5dc"></div>
<div class="a" style="left:5px;top:955px;width:0;height:0;border-top:4px solid transparent;border-bottom:4px solid transparent;border-left:4px solid #333"></div>
<div class="a" style="left:328px;top:921px;width:791px;height:146px;border:1px solid #dfe6ec;background:#fff"></div>
<div class="th" style="left:329px;top:922px;width:789px;height:59px"></div>
<div class="t b" style="left:331px;top:925px;font-size:13px;color:#111">Monday, May 22, 2017</div>
<div class="hl" style="left:329px;top:951px;width:789px;background:#d6dee5"></div>
<div class="hl" style="left:329px;top:981px;width:789px;background:#d6dee5"></div>
<div class="vl" style="left:399px;top:952px;height:29px;background:#d6dee5"></div>
<div class="t b" style="left:329px;top:956px;width:70px;text-align:center;color:#111">07:00</div>
<div class="vl" style="left:469px;top:952px;height:29px;background:#d6dee5"></div>
<div class="t b" style="left:399px;top:956px;width:70px;text-align:center;color:#111">08:00</div>
<div class="vl" style="left:539px;top:952px;height:29px;background:#d6dee5"></div>
<div class="t b" style="left:469px;top:956px;width:70px;text-align:center;color:#111">09:00</div>
<div class="vl" style="left:609px;top:952px;height:29px;background:#d6dee5"></div>
<div class="t b" style="left:539px;top:956px;width:70px;text-align:center;color:#111">10:00</div>
<div class="vl" style="left:679px;top:952px;height:29px;background:#d6dee5"></div>
<div class="t b" style="left:609px;top:956px;width:70px;text-align:center;color:#111">11:00</div>
<div class="vl" style="left:749px;top:952px;height:29px;background:#d6dee5"></div>
<div class="t b" style="left:679px;top:956px;width:70px;text-align:center;color:#111">12:00</div>
<div class="vl" style="left:819px;top:952px;height:29px;background:#d6dee5"></div>
<div class="t b" style="left:749px;top:956px;width:70px;text-align:center;color:#111">13:00</div>
<div class="vl" style="left:889px;top:952px;height:29px;background:#d6dee5"></div>
<div class="t b" style="left:819px;top:956px;width:70px;text-align:center;color:#111">14:00</div>
<div class="vl" style="left:959px;top:952px;height:29px;background:#d6dee5"></div>
<div class="t b" style="left:889px;top:956px;width:70px;text-align:center;color:#111">15:00</div>
<div class="vl" style="left:1029px;top:952px;height:29px;background:#d6dee5"></div>
<div class="t b" style="left:959px;top:956px;width:70px;text-align:center;color:#111">16:00</div>
<div class="vl" style="left:1099px;top:952px;height:29px;background:#d6dee5"></div>
<div class="t b" style="left:1029px;top:956px;width:70px;text-align:center;color:#111">17:00</div>
<div class="a" style="left:1101px;top:922px;width:17px;height:59px;background:#f2f4f6"></div>
<div class="gbar" style="left:467px;top:990px;width:323px;background:linear-gradient(#5a5a9a,#6262a2 50%,#9a9ac6);border-color:#555">02461</div>
<div class="gbar" style="left:467px;top:1021px;width:239px;background:linear-gradient(#6a3e9e,#7447a6 50%,#a382c8);border-color:#555">02475</div>
<div class="hs" style="left:329px;top:1046px;width:789px;height:20px"></div>
<div class="a" style="left:336px;top:1052px;width:0;height:0;border-top:4px solid transparent;border-bottom:4px solid transparent;border-right:5px solid #333"></div>
<div class="a" style="left:1105px;top:1052px;width:0;height:0;border-top:4px solid transparent;border-bottom:4px solid transparent;border-left:5px solid #333"></div>
<div class="thumb" style="left:351px;top:1047px;width:422px;height:18px"></div>
<div class="a" style="left:558px;top:1052px;width:1px;height:8px;background:#555;box-shadow:3px 0 0 #555,6px 0 0 #555"></div>
<div class="panel" style="left:1138px;top:93px;width:781px;height:984px;border-top:none"></div>
<div class="hl" style="left:1211px;top:93px;width:708px;background:#d4dce3"></div>
<div class="tab" style="left:1138px;top:61px;width:73px;height:33px"></div>
<div class="t tabt" style="left:1147px;top:73px">Map View</div>
<div class="t" style="left:1162px;top:115px;color:#222">Actions</div><div class="car" style="left:1216px;top:120px"></div>
<div class="sep" style="left:1241px;top:107px;height:28px"></div>



<svg class="a" style="left:1250px;top:110px" width="90" height="20" viewBox="1250 110 90 20">
<path d="M256.5,126.5 L263,120" transform="translate(1000 0)" stroke="#7d8089" stroke-width="2.6" stroke-linecap="round"/>
<path d="M1260.5,115 L1264,114.5 L1269.5,119.5 L1267.5,122 L1265,120 L1262,121 Z" fill="#7d8089"/>
<path d="M1255,117 A2.6,2.6 0 0 0 1259.5,119.5 L1261.5,121.5 M1263,122.5 L1265,124.5 A2.6,2.6 0 0 1 1267,128" fill="none" stroke="#7d8089" stroke-width="1.8"/>
<rect x="1286.8" y="120.5" width="6" height="5.8" rx="1.3" fill="none" stroke="#7d8089" stroke-width="1.5"/>
<rect x="1295.2" y="120.5" width="6" height="5.8" rx="1.3" fill="none" stroke="#7d8089" stroke-width="1.5"/>
<path d="M1286,121 H1302 M1286.5,118 Q1289.5,115.5 1292.5,117 M1295.5,117 Q1298.5,115.5 1301.5,118" fill="none" stroke="#7d8089" stroke-width="1.2"/>
<circle cx="1321.8" cy="116.8" r="1.9" fill="#7d8089"/>
<rect x="1319" y="121" width="5.8" height="5.8" fill="#7d8089"/>
<path d="M1326,116 Q1334,114 1334,121 Q1334,128 1326,127" fill="none" stroke="#7d8089" stroke-width="1.8"/>
<circle cx="1327.8" cy="121" r="1.9" fill="none" stroke="#7d8089" stroke-width="1.4"/>
</svg>
<div class="a" style="left:1887px;top:54px;width:23px;height:7px;border:1px solid #c9d1d8;background:#eef1f3"></div><div class="a" style="left:1895px;top:56px;width:0;height:0;border-left:4px solid transparent;border-right:4px solid transparent;border-top:3px solid #222"></div>
<!--MAP--><svg class="a" style="left:1148px;top:137px" width="762" height="927" viewBox="1148 137 762 927" font-family="Liberation Sans, sans-serif"><rect x="1149" y="138" width="760" height="925" fill="#e7ebed"/><defs><pattern id="grid" x="1149" y="138" width="27.6" height="27.6" patternUnits="userSpaceOnUse"><path d="M0 0.5 H27.6 M0.5 0 V27.6" stroke="#d6cca2" stroke-width="1.1" fill="none"/></pattern><pattern id="grid2" x="1163" y="152" width="13.8" height="13.8" patternUnits="userSpaceOnUse"><path d="M0 0.5 H13.8 M0.5 0 V13.8" stroke="#d9d1b0" stroke-width="0.9" fill="none"/></pattern><pattern id="fine" x="1149" y="138" width="4.6" height="4.6" patternUnits="userSpaceOnUse"><path d="M0 0.5 H4.6 M0.5 0 V4.6" stroke="#cdd2d4" stroke-width="0.8" fill="none"/></pattern><clipPath id="mc"><rect x="1149" y="138" width="760" height="925"/></clipPath></defs><g clip-path="url(#mc)"><rect x="1149" y="138" width="760" height="925" fill="url(#grid)" opacity="0.75"/><path d="M1149,690 L1400,690 L1440,580 L1560,430 L1640,138 L1909,138 L1909,1063 L1149,1063 Z" fill="url(#grid2)" opacity="0.55"/><path d="M1560,680 L1850,680 L1909,860 L1909,1063 L1560,1063 Z" fill="url(#fine)" opacity="0.5"/><path d="M1161.0,138.0 L1199.0,138.0 L1199.0,150.0 L1185.0,157.0 L1163.0,157.0 Z" fill="#cfe6bb" /><path d="M1149.0,183.0 L1166.0,185.0 L1167.0,206.0 L1149.0,208.0 Z" fill="#cfe6bb" /><path d="M1154.0,288.0 L1189.0,290.0 L1190.0,313.0 L1170.0,316.0 L1156.0,312.0 Z" fill="#cfe6bb" /><path d="M1191.0,336.0 L1250.0,332.0 L1284.0,338.0 L1282.0,362.0 L1240.0,365.0 L1195.0,362.0 Z" fill="#cfe6bb" /><path d="M1434.0,170.0 L1452.0,168.0 L1462.0,185.0 L1478.0,190.0 L1479.0,228.0 L1455.0,226.0 L1440.0,205.0 Z" fill="#cfe6bb" /><path d="M1449.0,263.0 L1470.0,262.0 L1479.0,300.0 L1470.0,313.0 L1452.0,310.0 Z" fill="#cfe6bb" /><path d="M1499.0,268.0 L1520.0,270.0 L1524.0,313.0 L1505.0,310.0 Z" fill="#cfe6bb" /><path d="M1539.0,170.0 L1560.0,168.0 L1574.0,200.0 L1572.0,238.0 L1552.0,236.0 L1542.0,210.0 Z" fill="#cfe6bb" /><path d="M1311.0,295.0 L1340.0,293.0 L1361.0,306.0 L1358.0,327.0 L1320.0,328.0 Z" fill="#cfe6bb" /><path d="M1384.0,163.0 L1413.0,162.0 L1414.0,202.0 L1399.0,203.0 L1386.0,185.0 Z" fill="#cfe6bb" /><path d="M1160.0,455.0 L1205.0,452.0 L1210.0,500.0 L1200.0,505.0 L1165.0,500.0 Z" fill="#cfe6bb" /><path d="M1297.0,535.0 L1345.0,538.0 L1362.0,560.0 L1362.0,605.0 L1345.0,617.0 L1305.0,615.0 L1298.0,580.0 Z" fill="#cfe6bb" /><path d="M1480.0,420.0 L1500.0,418.0 L1505.0,470.0 L1490.0,500.0 L1478.0,470.0 Z" fill="#cfe6bb" /><path d="M1579.0,448.0 L1604.0,446.0 L1606.0,473.0 L1584.0,474.0 Z" fill="#cfe6bb" /><path d="M1224.0,975.0 L1262.0,972.0 L1284.0,980.0 L1286.0,1002.0 L1240.0,1003.0 L1226.0,995.0 Z" fill="#cfe6bb" /><path d="M1149.0,967.0 L1199.0,968.0 L1199.0,1004.0 L1172.0,1006.0 L1149.0,1003.0 Z" fill="#cfe6bb" /><path d="M1364.0,942.0 L1394.0,943.0 L1394.0,960.0 L1366.0,960.0 Z" fill="#cfe6bb" /><path d="M1424.0,960.0 L1456.0,958.0 L1484.0,955.0 L1486.0,982.0 L1456.0,988.0 L1428.0,986.0 Z" fill="#cfe6bb" /><path d="M1270.0,700.0 L1296.0,698.0 L1298.0,722.0 L1272.0,724.0 Z" fill="#cfe6bb" /><path d="M1335.0,700.0 L1370.0,698.0 L1372.0,720.0 L1340.0,722.0 Z" fill="#cfe6bb" /><path d="M1420.0,595.0 L1436.0,593.0 L1438.0,612.0 L1421.0,612.0 Z" fill="#cfe6bb" /><path d="M1555.0,700.0 L1572.0,700.0 L1574.0,720.0 L1556.0,720.0 Z" fill="#cfe6bb" /><path d="M1236.0,728.0 L1262.0,728.0 L1262.0,742.0 L1236.0,742.0 Z" fill="#cfe6bb" /><path d="M1188.0,770.0 L1213.0,770.0 L1213.0,790.0 L1188.0,790.0 Z" fill="#cfe6bb" /><path d="M1388.0,822.0 L1410.0,822.0 L1410.0,838.0 L1388.0,838.0 Z" fill="#cfe6bb" /><path d="M1650.0,455.0 L1670.0,455.0 L1672.0,478.0 L1652.0,478.0 Z" fill="#cfe6bb" /><path d="M1692.0,455.0 L1710.0,452.0 L1712.0,475.0 L1694.0,476.0 Z" fill="#cfe6bb" /><path d="M1750.0,870.0 L1770.0,870.0 L1770.0,888.0 L1750.0,888.0 Z" fill="#cfe6bb" /><path d="M1592.0,360.0 L1612.0,360.0 L1614.0,378.0 L1594.0,378.0 Z" fill="#cfe6bb" /><path d="M1625.0,400.0 L1646.0,398.0 L1650.0,420.0 L1628.0,420.0 Z" fill="#cfe6bb" /><path d="M1893.0,898.0 L1909.0,900.0 L1909.0,940.0 L1897.0,940.0 Z" fill="#cfe6bb" /><path d="M1500.0,520.0 L1520.0,520.0 L1520.0,545.0 L1500.0,545.0 Z" fill="#cfe6bb" /><path d="M1159.0,590.0 L1180.0,590.0 L1180.0,610.0 L1159.0,610.0 Z" fill="#cfe6bb" /><path d="M1240.0,590.0 L1260.0,590.0 L1260.0,605.0 L1240.0,605.0 Z" fill="#cfe6bb" /><path d="M1170.0,815.0 L1190.0,815.0 L1190.0,840.0 L1170.0,840.0 Z" fill="#cfe6bb" /><path d="M1210.0,860.0 L1235.0,860.0 L1235.0,880.0 L1210.0,880.0 Z" fill="#cfe6bb" /><path d="M1320.0,855.0 L1345.0,855.0 L1345.0,870.0 L1320.0,870.0 Z" fill="#cfe6bb" /><path d="M1540.0,830.0 L1560.0,830.0 L1560.0,845.0 L1540.0,845.0 Z" fill="#cfe6bb" /><path d="M1448.0,172.0 L1462.0,170.0 L1474.0,200.0 L1476.0,260.0 L1470.0,300.0 L1474.0,395.0 L1462.0,395.0 L1455.0,330.0 L1450.0,250.0 Z" fill="#cfe6bb" /><path d="M1585.0,330.0 L1598.0,328.0 L1611.0,380.0 L1610.0,446.0 L1598.0,446.0 L1590.0,400.0 Z" fill="#cfe6bb" /><path d="M1632.0,330.0 L1650.0,328.0 L1675.0,370.0 L1672.0,437.0 L1655.0,437.0 L1640.0,390.0 Z" fill="#cfe6bb" /><path d="M1247.0,318.0 L1290.0,317.0 L1292.0,339.0 L1250.0,340.0 Z" fill="#cfe6bb" /><path d="M1380.0,159.0 L1406.0,158.0 L1406.0,202.0 L1382.0,200.0 Z" fill="#cfe6bb" /><path d="M1530.0,380.0 L1548.0,380.0 L1550.0,420.0 L1532.0,420.0 Z" fill="#cfe6bb" /><path d="M1400.0,380.0 L1420.0,380.0 L1420.0,400.0 L1400.0,400.0 Z" fill="#cfe6bb" /><path d="M1360.0,360.0 L1380.0,360.0 L1380.0,375.0 L1360.0,375.0 Z" fill="#cfe6bb" /><path d="M1200.0,400.0 L1230.0,398.0 L1232.0,420.0 L1202.0,420.0 Z" fill="#cfe6bb" /><path d="M1280.0,400.0 L1300.0,400.0 L1300.0,412.0 L1280.0,412.0 Z" fill="#cfe6bb" /><path d="M1180.0,420.0 L1200.0,420.0 L1200.0,440.0 L1180.0,440.0 Z" fill="#cfe6bb" /><path d="M1240.0,455.0 L1262.0,455.0 L1262.0,470.0 L1240.0,470.0 Z" fill="#cfe6bb" /><path d="M1350.0,440.0 L1370.0,440.0 L1370.0,455.0 L1350.0,455.0 Z" fill="#cfe6bb" /><path d="M1560.0,500.0 L1580.0,500.0 L1580.0,520.0 L1560.0,520.0 Z" fill="#cfe6bb" /><path d="M1610.0,505.0 L1625.0,505.0 L1625.0,520.0 L1610.0,520.0 Z" fill="#cfe6bb" /><path d="M1740.0,470.0 L1760.0,470.0 L1760.0,485.0 L1740.0,485.0 Z" fill="#cfe6bb" /><path d="M1700.0,620.0 L1720.0,620.0 L1720.0,640.0 L1700.0,640.0 Z" fill="#cfe6bb" /><path d="M1655.0,690.0 L1670.0,690.0 L1670.0,700.0 L1655.0,700.0 Z" fill="#cfe6bb" /><path d="M1820.0,700.0 L1840.0,700.0 L1845.0,720.0 L1825.0,720.0 Z" fill="#cfe6bb" /><path d="M1590.0,750.0 L1605.0,750.0 L1605.0,765.0 L1590.0,765.0 Z" fill="#cfe6bb" /><path d="M1660.0,800.0 L1680.0,800.0 L1680.0,815.0 L1660.0,815.0 Z" fill="#cfe6bb" /><path d="M1730.0,780.0 L1745.0,780.0 L1745.0,792.0 L1730.0,792.0 Z" fill="#cfe6bb" /><path d="M1780.0,850.0 L1795.0,850.0 L1795.0,862.0 L1780.0,862.0 Z" fill="#cfe6bb" /><path d="M1510.0,840.0 L1525.0,840.0 L1525.0,855.0 L1510.0,855.0 Z" fill="#cfe6bb" /><path d="M1560.0,940.0 L1575.0,940.0 L1575.0,955.0 L1560.0,955.0 Z" fill="#cfe6bb" /><path d="M1640.0,1000.0 L1660.0,1000.0 L1660.0,1015.0 L1640.0,1015.0 Z" fill="#cfe6bb" /><path d="M1700.0,960.0 L1715.0,960.0 L1715.0,975.0 L1700.0,975.0 Z" fill="#cfe6bb" /><path d="M1820.0,1040.0 L1840.0,1040.0 L1840.0,1055.0 L1820.0,1055.0 Z" fill="#cfe6bb" /><path d="M1350.0,1040.0 L1370.0,1040.0 L1370.0,1055.0 L1350.0,1055.0 Z" fill="#cfe6bb" /><path d="M1230.0,1040.0 L1250.0,1040.0 L1250.0,1055.0 L1230.0,1055.0 Z" fill="#cfe6bb" /><path d="M1430.0,640.0 L1447.0,618.0 L1483.0,611.0 L1530.0,628.0 L1527.0,680.0 L1514.0,700.0 L1499.0,716.0 L1484.0,727.0 L1461.0,729.0 L1440.0,718.0 L1425.0,700.0 L1422.0,668.0 Z" fill="#e8eaeb" stroke="#c5c9cc" stroke-width="1"/><path d="M1489,672 Q1495,678 1505,675" fill="none" stroke="#e783ab" stroke-width="2.5"/><rect x="1505" y="668" width="6" height="6" fill="#fff" stroke="#555" stroke-width="0.6"/><path d="M1478,668 Q1476,660 1484,660 Q1490,662 1486,668 Z" fill="none" stroke="#d8cca0" stroke-width="1"/><path d="M1371,608 H1392 M1371,614 H1392 M1371,620 H1392 M1371,626 H1392 M1400,612 H1422 M1400,618 H1422 M1400,624 H1422 M1400,630 H1422" stroke="#9aa0a4" stroke-width="1" stroke-dasharray="3 1.5"/><path d="M1601.4,138.0 L1610.0,172.2 L1627.0,206.5 L1644.2,240.7 L1655.0,266.4 L1665.6,296.4 L1680.6,322.0 L1695.6,347.8 L1708.4,369.2 L1721.3,394.8 L1740.5,420.5 L1759.8,446.2 L1777.0,463.3 L1794.0,480.5 L1809.0,502.0 L1815.0,523.0 L1813.3,549.0 L1817.6,574.6 L1823.3,580.0 L1830.0,620.0 L1840.0,653.3 L1846.7,676.7 L1853.3,690.0 L1856.7,706.7 L1860.0,736.7 L1866.7,756.7 L1876.7,780.0 L1883.3,796.7 L1890.0,820.0 L1896.7,833.3 L1895.5,849.0 L1897.8,870.0 L1902.0,892.0 L1910.0,898.0 L1910.0,138.0 Z" fill="#9acdfd"/><path d="M1176.0,236.0 L1192.0,234.0 L1194.0,252.0 L1180.0,256.0 Z" fill="#9acdfd" /><path d="M1149.0,233.0 L1156.0,235.0 L1156.0,243.0 L1149.0,243.0 Z" fill="#9acdfd" /><path d="M1154.0,346.0 L1163.0,345.0 L1165.0,360.0 L1155.0,360.0 Z" fill="#9acdfd" /><path d="M1272.0,224.0 L1279.0,222.0 L1280.0,238.0 L1272.0,236.0 Z" fill="#9acdfd" /><path d="M1274.0,138.0 L1285.0,138.0 L1284.0,145.0 L1276.0,145.0 Z" fill="#9acdfd" /><path d="M1319.0,138.0 L1336.0,138.0 L1334.0,149.0 L1322.0,148.0 Z" fill="#9acdfd" /><path d="M1303.0,590.0 L1308.0,583.0 L1314.0,572.0 L1316.0,562.0 L1322.0,566.0 L1326.0,574.0 L1334.0,578.0 L1341.0,586.0 L1338.0,594.0 L1330.0,599.0 L1320.0,596.0 L1310.0,601.0 L1304.0,598.0 Z" fill="#9acdfd" /><path d="M1478.0,705.0 L1486.0,702.0 L1484.0,711.0 Z" fill="#9acdfd" /><path d="M1455.0,138.0 L1458.0,170.0 L1470.0,200.0 L1478.0,240.0 L1482.0,280.0 L1490.0,330.0 L1500.0,380.0 L1506.0,420.0 L1508.0,470.0 L1512.0,520.0" fill="none" stroke="#8fc2ef" stroke-width="1.3" stroke-linejoin="round" stroke-linecap="round" /><path d="M1545.0,138.0 L1555.0,180.0 L1570.0,230.0 L1585.0,280.0 L1600.0,320.0 L1620.0,360.0 L1640.0,390.0 L1660.0,420.0 L1668.0,460.0 L1672.0,520.0 L1682.0,560.0" fill="none" stroke="#8fc2ef" stroke-width="1.3" stroke-linejoin="round" stroke-linecap="round" /><path d="M1745.0,560.0 L1745.0,620.0 L1770.0,680.0 L1780.0,740.0 L1800.0,800.0 L1830.0,840.0 L1850.0,880.0" fill="none" stroke="#8fc2ef" stroke-width="1.3" stroke-linejoin="round" stroke-linecap="round" /><path d="M1420.0,930.0 L1430.0,950.0 L1440.0,975.0 L1452.0,990.0 L1470.0,990.0 L1500.0,975.0 L1520.0,960.0" fill="none" stroke="#8fc2ef" stroke-width="1.3" stroke-linejoin="round" stroke-linecap="round" /><path d="M1590.0,800.0 L1600.0,840.0 L1610.0,880.0 L1620.0,920.0 L1615.0,960.0 L1612.0,1000.0" fill="none" stroke="#8fc2ef" stroke-width="1.3" stroke-linejoin="round" stroke-linecap="round" /><path d="M1590.0,1045.0 L1604.0,1025.0 L1700.0,987.0 L1791.0,950.0 L1816.0,945.0 L1850.0,928.0" fill="none" stroke="#8fc2ef" stroke-width="1.3" stroke-linejoin="round" stroke-linecap="round" /><path d="M1590.0,1045.0 L1604.0,1025.0 L1700.0,987.0 L1791.0,950.0 L1816.0,945.0 L1850.0,928.0" fill="none" stroke="#8fc2ef" stroke-width="2.6" stroke-linejoin="round" stroke-linecap="round" /><path d="M1149.0,290.0 L1200.0,270.0 L1260.0,230.0 L1300.0,200.0 L1350.0,175.0 L1380.0,160.0 L1440.0,138.0" fill="none" stroke="#858585" stroke-width="1.3" stroke-linejoin="round" stroke-linecap="round" stroke-dasharray="5 2"/><path d="M1360.0,138.0 L1390.0,200.0 L1420.0,280.0 L1460.0,380.0 L1490.0,450.0 L1520.0,530.0" fill="none" stroke="#858585" stroke-width="1.3" stroke-linejoin="round" stroke-linecap="round" stroke-dasharray="5 2"/><path d="M1575.0,138.0 L1600.0,200.0 L1640.0,280.0 L1680.0,350.0 L1720.0,420.0" fill="none" stroke="#858585" stroke-width="1.3" stroke-linejoin="round" stroke-linecap="round" stroke-dasharray="5 2"/><path d="M1149.0,848.0 L1250.0,820.0 L1330.0,790.0 L1430.0,760.0 L1480.0,740.0" fill="none" stroke="#858585" stroke-width="1.3" stroke-linejoin="round" stroke-linecap="round" stroke-dasharray="5 2"/><path d="M1180.0,760.0 L1280.0,790.0 L1400.0,830.0 L1454.0,850.0 L1530.0,870.0 L1600.0,880.0" fill="none" stroke="#858585" stroke-width="1.3" stroke-linejoin="round" stroke-linecap="round" stroke-dasharray="5 2"/><path d="M1459.0,820.0 L1529.0,850.0 L1600.0,855.0 L1704.0,853.0 L1804.0,850.0 L1860.0,860.0" fill="none" stroke="#858585" stroke-width="1.3" stroke-linejoin="round" stroke-linecap="round" stroke-dasharray="5 2"/><path d="M1714.0,678.0 L1714.0,760.0 L1716.0,860.0 L1716.0,1063.0" fill="none" stroke="#858585" stroke-width="1.3" stroke-linejoin="round" stroke-linecap="round" stroke-dasharray="5 2"/><path d="M1176.0,1035.0 L1250.0,1028.0 L1330.0,1030.0 L1400.0,1020.0 L1470.0,1000.0 L1530.0,985.0 L1600.0,965.0 L1670.0,950.0" fill="none" stroke="#858585" stroke-width="1.3" stroke-linejoin="round" stroke-linecap="round" stroke-dasharray="5 2"/><path d="M1640.0,950.0 L1700.0,930.0 L1760.0,905.0 L1830.0,880.0" fill="none" stroke="#858585" stroke-width="1.3" stroke-linejoin="round" stroke-linecap="round" stroke-dasharray="5 2"/><path d="M1270.0,1063.0 L1310.0,1050.0 L1350.0,1038.0" fill="none" stroke="#858585" stroke-width="1.3" stroke-linejoin="round" stroke-linecap="round" stroke-dasharray="5 2"/><path d="M1780.0,680.0 L1790.0,760.0 L1810.0,820.0 L1830.0,880.0 L1850.0,940.0 L1880.0,1000.0" fill="none" stroke="#858585" stroke-width="1.3" stroke-linejoin="round" stroke-linecap="round" stroke-dasharray="5 2"/><path d="M1555.0,1000.0 L1560.0,1063.0" fill="none" stroke="#858585" stroke-width="1.3" stroke-linejoin="round" stroke-linecap="round" stroke-dasharray="5 2"/><path d="M1630.0,840.0 L1700.0,850.0 L1780.0,852.0 L1860.0,858.0" fill="none" stroke="#858585" stroke-width="1.3" stroke-linejoin="round" stroke-linecap="round" stroke-dasharray="5 2"/><path d="M1680.0,900.0 L1740.0,905.0 L1800.0,912.0 L1860.0,915.0" fill="none" stroke="#858585" stroke-width="1.3" stroke-linejoin="round" stroke-linecap="round" stroke-dasharray="5 2"/><path d="M1720.0,780.0 L1740.0,830.0 L1760.0,880.0 L1790.0,940.0" fill="none" stroke="#858585" stroke-width="1.3" stroke-linejoin="round" stroke-linecap="round" stroke-dasharray="5 2"/><path d="M1500.0,900.0 L1560.0,930.0 L1640.0,960.0 L1700.0,990.0 L1760.0,1010.0" fill="none" stroke="#858585" stroke-width="1.3" stroke-linejoin="round" stroke-linecap="round" stroke-dasharray="5 2"/><path d="M1610.0,970.0 L1680.0,960.0 L1760.0,960.0 L1850.0,960.0" fill="none" stroke="#858585" stroke-width="1.3" stroke-linejoin="round" stroke-linecap="round" stroke-dasharray="5 2"/><path d="M1840.0,700.0 L1845.0,780.0 L1850.0,860.0 L1860.0,940.0 L1870.0,1063.0" fill="none" stroke="#858585" stroke-width="1.3" stroke-linejoin="round" stroke-linecap="round" stroke-dasharray="5 2"/><path d="M1760.0,1063.0 L1770.0,1000.0 L1780.0,960.0 L1790.0,940.0" fill="none" stroke="#858585" stroke-width="1.3" stroke-linejoin="round" stroke-linecap="round" stroke-dasharray="5 2"/><path d="M1600.0,700.0 L1640.0,760.0 L1680.0,820.0" fill="none" stroke="#858585" stroke-width="1.3" stroke-linejoin="round" stroke-linecap="round" stroke-dasharray="5 2"/><path d="M1460.0,720.0 L1500.0,740.0 L1530.0,760.0" fill="none" stroke="#858585" stroke-width="1.3" stroke-linejoin="round" stroke-linecap="round" stroke-dasharray="5 2"/><path d="M1470.0,820.0 L1500.0,830.0 L1540.0,860.0" fill="none" stroke="#858585" stroke-width="1.3" stroke-linejoin="round" stroke-linecap="round" stroke-dasharray="5 2"/><path d="M1706.0,677.0 L1708.0,800.0 L1710.0,1063.0" fill="none" stroke="#858585" stroke-width="1.3" stroke-linejoin="round" stroke-linecap="round" stroke-dasharray="5 2"/><path d="M1783.0,728.0 L1786.0,900.0 L1790.0,1063.0" fill="none" stroke="#858585" stroke-width="1.3" stroke-linejoin="round" stroke-linecap="round" stroke-dasharray="5 2"/><path d="M1642.0,853.0 L1783.0,855.0" fill="none" stroke="#858585" stroke-width="1.3" stroke-linejoin="round" stroke-linecap="round" stroke-dasharray="5 2"/><path d="M1663.0,943.0 L1775.0,917.0" fill="none" stroke="#858585" stroke-width="1.3" stroke-linejoin="round" stroke-linecap="round" stroke-dasharray="5 2"/><path d="M1578.0,964.0 L1728.0,934.0" fill="none" stroke="#858585" stroke-width="1.3" stroke-linejoin="round" stroke-linecap="round" stroke-dasharray="5 2"/><path d="M1149.0,840.0 L1278.0,793.0 L1389.0,754.0" fill="none" stroke="#858585" stroke-width="1.3" stroke-linejoin="round" stroke-linecap="round" stroke-dasharray="5 2"/><path d="M1149.0,763.0 L1320.0,823.0 L1449.0,874.0" fill="none" stroke="#858585" stroke-width="1.3" stroke-linejoin="round" stroke-linecap="round" stroke-dasharray="5 2"/><path d="M1458.0,823.0 L1535.0,857.0 L1640.0,858.0" fill="none" stroke="#858585" stroke-width="1.3" stroke-linejoin="round" stroke-linecap="round" stroke-dasharray="5 2"/><path d="M1440.0,722.0 L1470.0,733.0 L1500.0,745.0" fill="none" stroke="#8c8c8c" stroke-width="3" stroke-linejoin="round" stroke-linecap="round" stroke-dasharray="3 1.5" opacity="0.8"/><path d="M1848.0,840.0 L1878.0,900.0" fill="none" stroke="#8c8c8c" stroke-width="3" stroke-linejoin="round" stroke-linecap="round" stroke-dasharray="3 1.5" opacity="0.8"/><path d="M1740.0,960.0 L1780.0,945.0 L1820.0,930.0" fill="none" stroke="#8c8c8c" stroke-width="3" stroke-linejoin="round" stroke-linecap="round" stroke-dasharray="3 1.5" opacity="0.8"/><path d="M1600.0,880.0 L1640.0,895.0" fill="none" stroke="#8c8c8c" stroke-width="3" stroke-linejoin="round" stroke-linecap="round" stroke-dasharray="3 1.5" opacity="0.8"/><path d="M1336.0,161.0 L1539.0,161.0" fill="none" stroke="#eadb97" stroke-width="2.8" stroke-linejoin="round" stroke-linecap="round" /><path d="M1311.0,138.0 L1344.0,165.0 L1369.0,183.0 L1399.0,203.0 L1434.0,230.0 L1439.0,243.0" fill="none" stroke="#eadb97" stroke-width="2.8" stroke-linejoin="round" stroke-linecap="round" /><path d="M1414.0,138.0 L1419.0,163.0 L1429.0,195.0 L1436.0,243.0 L1449.0,283.0 L1461.0,330.0 L1481.0,378.0 L1492.0,408.0 L1500.0,440.0" fill="none" stroke="#eadb97" stroke-width="2.8" stroke-linejoin="round" stroke-linecap="round" /><path d="M1346.0,138.0 L1346.0,218.0 L1352.0,243.0 L1354.0,288.0" fill="none" stroke="#eadb97" stroke-width="2.8" stroke-linejoin="round" stroke-linecap="round" /><path d="M1199.0,245.0 L1436.0,244.0 L1471.0,239.0 L1629.0,239.0" fill="none" stroke="#eadb97" stroke-width="2.8" stroke-linejoin="round" stroke-linecap="round" /><path d="M1149.0,258.0 L1196.0,255.0 L1199.0,245.0" fill="none" stroke="#eadb97" stroke-width="2.8" stroke-linejoin="round" stroke-linecap="round" /><path d="M1284.0,331.0 L1629.0,333.0 L1662.0,334.0 L1684.0,360.0" fill="none" stroke="#eadb97" stroke-width="2.8" stroke-linejoin="round" stroke-linecap="round" /><path d="M1149.0,378.0 L1211.0,368.0 L1259.0,359.0 L1629.0,360.0 L1687.0,362.0" fill="none" stroke="#eadb97" stroke-width="2.8" stroke-linejoin="round" stroke-linecap="round" /><path d="M1356.0,288.0 L1389.0,308.0 L1399.0,330.0 L1429.0,350.0 L1431.0,408.0 L1432.0,470.0 L1430.0,530.0" fill="none" stroke="#eadb97" stroke-width="2.8" stroke-linejoin="round" stroke-linecap="round" /><path d="M1329.0,290.0 L1299.0,300.0 L1299.0,318.0 L1291.0,350.0 L1285.0,380.0" fill="none" stroke="#eadb97" stroke-width="2.8" stroke-linejoin="round" stroke-linecap="round" /><path d="M1149.0,335.0 L1204.0,370.0 L1231.0,388.0 L1284.0,405.0 L1310.0,430.0" fill="none" stroke="#eadb97" stroke-width="2.8" stroke-linejoin="round" stroke-linecap="round" /><path d="M1284.0,333.0 L1309.0,363.0 L1349.0,398.0 L1372.0,420.0" fill="none" stroke="#eadb97" stroke-width="2.8" stroke-linejoin="round" stroke-linecap="round" /><path d="M1539.0,138.0 L1539.0,160.0 L1559.0,183.0 L1589.0,248.0 L1611.0,295.0 L1629.0,328.0" fill="none" stroke="#eadb97" stroke-width="2.8" stroke-linejoin="round" stroke-linecap="round" /><path d="M1581.0,333.0 L1599.0,363.0 L1619.0,408.0 L1629.0,440.0" fill="none" stroke="#eadb97" stroke-width="2.8" stroke-linejoin="round" stroke-linecap="round" /><path d="M1603.0,363.0 L1631.0,430.0 L1629.0,480.0 L1629.0,678.0 L1621.0,820.0 L1624.0,948.0 L1626.0,1063.0" fill="none" stroke="#eadb97" stroke-width="2.8" stroke-linejoin="round" stroke-linecap="round" /><path d="M1661.0,333.0 L1684.0,360.0 L1703.0,380.0 L1714.0,408.0 L1740.0,435.0 L1784.0,482.0 L1806.0,510.0" fill="none" stroke="#eadb97" stroke-width="2.8" stroke-linejoin="round" stroke-linecap="round" /><path d="M1149.0,415.0 L1334.0,415.0 L1496.0,418.0 L1629.0,425.0" fill="none" stroke="#eadb97" stroke-width="2.8" stroke-linejoin="round" stroke-linecap="round" /><path d="M1149.0,449.0 L1231.0,480.0 L1299.0,508.0 L1399.0,553.0 L1484.0,593.0" fill="none" stroke="#eadb97" stroke-width="2.8" stroke-linejoin="round" stroke-linecap="round" /><path d="M1149.0,525.0 L1300.0,545.0 L1399.0,562.0 L1450.0,580.0" fill="none" stroke="#eadb97" stroke-width="2.8" stroke-linejoin="round" stroke-linecap="round" /><path d="M1149.0,533.0 L1466.0,533.0 L1629.0,525.0" fill="none" stroke="#eadb97" stroke-width="2.8" stroke-linejoin="round" stroke-linecap="round" /><path d="M1230.0,420.0 L1238.0,678.0" fill="none" stroke="#eadb97" stroke-width="2.8" stroke-linejoin="round" stroke-linecap="round" /><path d="M1494.0,408.0 L1490.0,600.0" fill="none" stroke="#eadb97" stroke-width="2.8" stroke-linejoin="round" stroke-linecap="round" /><path d="M1410.0,490.0 L1400.0,600.0 L1396.0,678.0 L1386.0,753.0 L1389.0,840.0 L1399.0,948.0 L1414.0,998.0 L1417.0,1063.0" fill="none" stroke="#eadb97" stroke-width="2.8" stroke-linejoin="round" stroke-linecap="round" /><path d="M1219.0,678.0 L1216.0,825.0" fill="none" stroke="#eadb97" stroke-width="2.8" stroke-linejoin="round" stroke-linecap="round" /><path d="M1149.0,683.0 L1206.0,710.0 L1219.0,715.0 L1433.0,711.0 L1456.0,722.0 L1482.0,728.0 L1501.0,714.0" fill="none" stroke="#eadb97" stroke-width="2.8" stroke-linejoin="round" stroke-linecap="round" /><path d="M1486.0,725.0 L1854.0,722.0" fill="none" stroke="#eadb97" stroke-width="2.8" stroke-linejoin="round" stroke-linecap="round" /><path d="M1149.0,820.0 L1459.0,815.0 L1879.0,808.0" fill="none" stroke="#eadb97" stroke-width="2.8" stroke-linejoin="round" stroke-linecap="round" /><path d="M1149.0,908.0 L1429.0,903.0 L1629.0,903.0 L1904.0,900.0" fill="none" stroke="#eadb97" stroke-width="2.8" stroke-linejoin="round" stroke-linecap="round" /><path d="M1429.0,928.0 L1904.0,922.0" fill="none" stroke="#eadb97" stroke-width="2.8" stroke-linejoin="round" stroke-linecap="round" /><path d="M1706.0,678.0 L1709.0,948.0 L1714.0,1063.0" fill="none" stroke="#eadb97" stroke-width="2.8" stroke-linejoin="round" stroke-linecap="round" /><path d="M1794.0,678.0 L1796.0,930.0 L1799.0,1063.0" fill="none" stroke="#eadb97" stroke-width="2.8" stroke-linejoin="round" stroke-linecap="round" /><path d="M1506.0,763.0 L1509.0,930.0 L1529.0,990.0 L1529.0,1063.0" fill="none" stroke="#eadb97" stroke-width="2.8" stroke-linejoin="round" stroke-linecap="round" /><path d="M1849.0,678.0 L1856.0,728.0 L1871.0,765.0 L1879.0,803.0 L1891.0,828.0 L1900.0,870.0 L1909.0,900.0" fill="none" stroke="#eadb97" stroke-width="2.8" stroke-linejoin="round" stroke-linecap="round" /><path d="M1686.0,948.0 L1804.0,898.0 L1839.0,838.0" fill="none" stroke="#eadb97" stroke-width="2.8" stroke-linejoin="round" stroke-linecap="round" /><path d="M1186.0,825.0 L1189.0,948.0 L1174.0,1000.0" fill="none" stroke="#eadb97" stroke-width="2.8" stroke-linejoin="round" stroke-linecap="round" /><path d="M1174.0,1030.0 L1261.0,1012.0 L1414.0,1002.0 L1481.0,982.0 L1531.0,990.0 L1589.0,991.0 L1614.0,982.0 L1729.0,930.0" fill="none" stroke="#eadb97" stroke-width="2.8" stroke-linejoin="round" stroke-linecap="round" /><path d="M1259.0,930.0 L1257.0,977.0 L1224.0,1005.0 L1229.0,1063.0" fill="none" stroke="#eadb97" stroke-width="2.8" stroke-linejoin="round" stroke-linecap="round" /><path d="M1321.0,930.0 L1324.0,1063.0" fill="none" stroke="#eadb97" stroke-width="2.8" stroke-linejoin="round" stroke-linecap="round" /><path d="M1604.0,1037.0 L1909.0,1035.0" fill="none" stroke="#eadb97" stroke-width="2.8" stroke-linejoin="round" stroke-linecap="round" /><path d="M1754.0,1005.0 L1799.0,970.0 L1830.0,940.0" fill="none" stroke="#eadb97" stroke-width="2.8" stroke-linejoin="round" stroke-linecap="round" /><path d="M1799.0,1005.0 L1909.0,1005.0" fill="none" stroke="#eadb97" stroke-width="2.8" stroke-linejoin="round" stroke-linecap="round" /><path d="M1149.0,967.0 L1324.0,960.0 L1400.0,958.0" fill="none" stroke="#eadb97" stroke-width="2.8" stroke-linejoin="round" stroke-linecap="round" /><path d="M1530.0,560.0 L1600.0,565.0 L1700.0,570.0" fill="none" stroke="#eadb97" stroke-width="2.8" stroke-linejoin="round" stroke-linecap="round" /><path d="M1660.0,420.0 L1700.0,483.0 L1704.0,560.0 L1706.0,678.0" fill="none" stroke="#eadb97" stroke-width="2.8" stroke-linejoin="round" stroke-linecap="round" /><path d="M1560.0,600.0 L1580.0,640.0 L1600.0,700.0" fill="none" stroke="#eadb97" stroke-width="2.8" stroke-linejoin="round" stroke-linecap="round" /><path d="M1336.0,161.0 L1539.0,161.0" fill="none" stroke="#fae878" stroke-width="1.9" stroke-linejoin="round" stroke-linecap="round" /><path d="M1311.0,138.0 L1344.0,165.0 L1369.0,183.0 L1399.0,203.0 L1434.0,230.0 L1439.0,243.0" fill="none" stroke="#fae878" stroke-width="1.9" stroke-linejoin="round" stroke-linecap="round" /><path d="M1414.0,138.0 L1419.0,163.0 L1429.0,195.0 L1436.0,243.0 L1449.0,283.0 L1461.0,330.0 L1481.0,378.0 L1492.0,408.0 L1500.0,440.0" fill="none" stroke="#fae878" stroke-width="1.9" stroke-linejoin="round" stroke-linecap="round" /><path d="M1346.0,138.0 L1346.0,218.0 L1352.0,243.0 L1354.0,288.0" fill="none" stroke="#fae878" stroke-width="1.9" stroke-linejoin="round" stroke-linecap="round" /><path d="M1199.0,245.0 L1436.0,244.0 L1471.0,239.0 L1629.0,239.0" fill="none" stroke="#fae878" stroke-width="1.9" stroke-linejoin="round" stroke-linecap="round" /><path d="M1149.0,258.0 L1196.0,255.0 L1199.0,245.0" fill="none" stroke="#fae878" stroke-width="1.9" stroke-linejoin="round" stroke-linecap="round" /><path d="M1284.0,331.0 L1629.0,333.0 L1662.0,334.0 L1684.0,360.0" fill="none" stroke="#fae878" stroke-width="1.9" stroke-linejoin="round" stroke-linecap="round" /><path d="M1149.0,378.0 L1211.0,368.0 L1259.0,359.0 L1629.0,360.0 L1687.0,362.0" fill="none" stroke="#fae878" stroke-width="1.9" stroke-linejoin="round" stroke-linecap="round" /><path d="M1356.0,288.0 L1389.0,308.0 L1399.0,330.0 L1429.0,350.0 L1431.0,408.0 L1432.0,470.0 L1430.0,530.0" fill="none" stroke="#fae878" stroke-width="1.9" stroke-linejoin="round" stroke-linecap="round" /><path d="M1329.0,290.0 L1299.0,300.0 L1299.0,318.0 L1291.0,350.0 L1285.0,380.0" fill="none" stroke="#fae878" stroke-width="1.9" stroke-linejoin="round" stroke-linecap="round" /><path d="M1149.0,335.0 L1204.0,370.0 L1231.0,388.0 L1284.0,405.0 L1310.0,430.0" fill="none" stroke="#fae878" stroke-width="1.9" stroke-linejoin="round" stroke-linecap="round" /><path d="M1284.0,333.0 L1309.0,363.0 L1349.0,398.0 L1372.0,420.0" fill="none" stroke="#fae878" stroke-width="1.9" stroke-linejoin="round" stroke-linecap="round" /><path d="M1539.0,138.0 L1539.0,160.0 L1559.0,183.0 L1589.0,248.0 L1611.0,295.0 L1629.0,328.0" fill="none" stroke="#fae878" stroke-width="1.9" stroke-linejoin="round" stroke-linecap="round" /><path d="M1581.0,333.0 L1599.0,363.0 L1619.0,408.0 L1629.0,440.0" fill="none" stroke="#fae878" stroke-width="1.9" stroke-linejoin="round" stroke-linecap="round" /><path d="M1603.0,363.0 L1631.0,430.0 L1629.0,480.0 L1629.0,678.0 L1621.0,820.0 L1624.0,948.0 L1626.0,1063.0" fill="none" stroke="#fae878" stroke-width="1.9" stroke-linejoin="round" stroke-linecap="round" /><path d="M1661.0,333.0 L1684.0,360.0 L1703.0,380.0 L1714.0,408.0 L1740.0,435.0 L1784.0,482.0 L1806.0,510.0" fill="none" stroke="#fae878" stroke-width="1.9" stroke-linejoin="round" stroke-linecap="round" /><path d="M1149.0,415.0 L1334.0,415.0 L1496.0,418.0 L1629.0,425.0" fill="none" stroke="#fae878" stroke-width="1.9" stroke-linejoin="round" stroke-linecap="round" /><path d="M1149.0,449.0 L1231.0,480.0 L1299.0,508.0 L1399.0,553.0 L1484.0,593.0" fill="none" stroke="#fae878" stroke-width="1.9" stroke-linejoin="round" stroke-linecap="round" /><path d="M1149.0,525.0 L1300.0,545.0 L1399.0,562.0 L1450.0,580.0" fill="none" stroke="#fae878" stroke-width="1.9" stroke-linejoin="round" stroke-linecap="round" /><path d="M1149.0,533.0 L1466.0,533.0 L1629.0,525.0" fill="none" stroke="#fae878" stroke-width="1.9" stroke-linejoin="round" stroke-linecap="round" /><path d="M1230.0,420.0 L1238.0,678.0" fill="none" stroke="#fae878" stroke-width="1.9" stroke-linejoin="round" stroke-linecap="round" /><path d="M1494.0,408.0 L1490.0,600.0" fill="none" stroke="#fae878" stroke-width="1.9" stroke-linejoin="round" stroke-linecap="round" /><path d="M1410.0,490.0 L1400.0,600.0 L1396.0,678.0 L1386.0,753.0 L1389.0,840.0 L1399.0,948.0 L1414.0,998.0 L1417.0,1063.0" fill="none" stroke="#fae878" stroke-width="1.9" stroke-linejoin="round" stroke-linecap="round" /><path d="M1219.0,678.0 L1216.0,825.0" fill="none" stroke="#fae878" stroke-width="1.9" stroke-linejoin="round" stroke-linecap="round" /><path d="M1149.0,683.0 L1206.0,710.0 L1219.0,715.0 L1433.0,711.0 L1456.0,722.0 L1482.0,728.0 L1501.0,714.0" fill="none" stroke="#fae878" stroke-width="1.9" stroke-linejoin="round" stroke-linecap="round" /><path d="M1486.0,725.0 L1854.0,722.0" fill="none" stroke="#fae878" stroke-width="1.9" stroke-linejoin="round" stroke-linecap="round" /><path d="M1149.0,820.0 L1459.0,815.0 L1879.0,808.0" fill="none" stroke="#fae878" stroke-width="1.9" stroke-linejoin="round" stroke-linecap="round" /><path d="M1149.0,908.0 L1429.0,903.0 L1629.0,903.0 L1904.0,900.0" fill="none" stroke="#fae878" stroke-width="1.9" stroke-linejoin="round" stroke-linecap="round" /><path d="M1429.0,928.0 L1904.0,922.0" fill="none" stroke="#fae878" stroke-width="1.9" stroke-linejoin="round" stroke-linecap="round" /><path d="M1706.0,678.0 L1709.0,948.0 L1714.0,1063.0" fill="none" stroke="#fae878" stroke-width="1.9" stroke-linejoin="round" stroke-linecap="round" /><path d="M1794.0,678.0 L1796.0,930.0 L1799.0,1063.0" fill="none" stroke="#fae878" stroke-width="1.9" stroke-linejoin="round" stroke-linecap="round" /><path d="M1506.0,763.0 L1509.0,930.0 L1529.0,990.0 L1529.0,1063.0" fill="none" stroke="#fae878" stroke-width="1.9" stroke-linejoin="round" stroke-linecap="round" /><path d="M1849.0,678.0 L1856.0,728.0 L1871.0,765.0 L1879.0,803.0 L1891.0,828.0 L1900.0,870.0 L1909.0,900.0" fill="none" stroke="#fae878" stroke-width="1.9" stroke-linejoin="round" stroke-linecap="round" /><path d="M1686.0,948.0 L1804.0,898.0 L1839.0,838.0" fill="none" stroke="#fae878" stroke-width="1.9" stroke-linejoin="round" stroke-linecap="round" /><path d="M1186.0,825.0 L1189.0,948.0 L1174.0,1000.0" fill="none" stroke="#fae878" stroke-width="1.9" stroke-linejoin="round" stroke-linecap="round" /><path d="M1174.0,1030.0 L1261.0,1012.0 L1414.0,1002.0 L1481.0,982.0 L1531.0,990.0 L1589.0,991.0 L1614.0,982.0 L1729.0,930.0" fill="none" stroke="#fae878" stroke-width="1.9" stroke-linejoin="round" stroke-linecap="round" /><path d="M1259.0,930.0 L1257.0,977.0 L1224.0,1005.0 L1229.0,1063.0" fill="none" stroke="#fae878" stroke-width="1.9" stroke-linejoin="round" stroke-linecap="round" /><path d="M1321.0,930.0 L1324.0,1063.0" fill="none" stroke="#fae878" stroke-width="1.9" stroke-linejoin="round" stroke-linecap="round" /><path d="M1604.0,1037.0 L1909.0,1035.0" fill="none" stroke="#fae878" stroke-width="1.9" stroke-linejoin="round" stroke-linecap="round" /><path d="M1754.0,1005.0 L1799.0,970.0 L1830.0,940.0" fill="none" stroke="#fae878" stroke-width="1.9" stroke-linejoin="round" stroke-linecap="round" /><path d="M1799.0,1005.0 L1909.0,1005.0" fill="none" stroke="#fae878" stroke-width="1.9" stroke-linejoin="round" stroke-linecap="round" /><path d="M1149.0,967.0 L1324.0,960.0 L1400.0,958.0" fill="none" stroke="#fae878" stroke-width="1.9" stroke-linejoin="round" stroke-linecap="round" /><path d="M1530.0,560.0 L1600.0,565.0 L1700.0,570.0" fill="none" stroke="#fae878" stroke-width="1.9" stroke-linejoin="round" stroke-linecap="round" /><path d="M1660.0,420.0 L1700.0,483.0 L1704.0,560.0 L1706.0,678.0" fill="none" stroke="#fae878" stroke-width="1.9" stroke-linejoin="round" stroke-linecap="round" /><path d="M1560.0,600.0 L1580.0,640.0 L1600.0,700.0" fill="none" stroke="#fae878" stroke-width="1.9" stroke-linejoin="round" stroke-linecap="round" /><path d="M1311.0,331.0 L1324.0,343.0 L1329.0,363.0 L1332.0,408.0 L1334.0,418.0" fill="none" stroke="#d97aa2" stroke-width="4.6" stroke-linejoin="round" stroke-linecap="round" /><path d="M1480.0,138.0 L1484.0,188.0 L1494.0,225.0 L1511.0,258.0 L1521.0,283.0 L1522.0,333.0 L1504.0,353.0 L1501.0,378.0 L1509.0,403.0 L1529.0,430.0 L1531.0,470.0 L1529.0,530.0 L1527.0,590.0 L1520.0,630.0" fill="none" stroke="#d97aa2" stroke-width="4.6" stroke-linejoin="round" stroke-linecap="round" /><path d="M1522.0,338.0 L1574.0,340.0 L1589.0,348.0 L1629.0,345.0 L1642.0,349.0" fill="none" stroke="#d97aa2" stroke-width="4.6" stroke-linejoin="round" stroke-linecap="round" /><path d="M1614.0,313.0 L1642.0,349.0 L1650.0,380.0 L1667.0,408.0 L1689.0,453.0 L1691.0,500.0 L1684.0,520.0 L1676.0,563.0 L1679.0,588.0 L1694.0,600.0 L1704.0,628.0 L1706.0,678.0 L1716.0,710.0 L1741.0,733.0 L1784.0,768.0 L1819.0,793.0 L1831.0,818.0 L1834.0,838.0 L1854.0,853.0 L1856.0,928.0 L1874.0,930.0 L1876.0,1063.0" fill="none" stroke="#d97aa2" stroke-width="4.6" stroke-linejoin="round" stroke-linecap="round" /><path d="M1149.0,500.0 L1184.0,502.0 L1289.0,518.0 L1324.0,530.0 L1369.0,555.0 L1406.0,590.0 L1484.0,615.0" fill="none" stroke="#d97aa2" stroke-width="4.6" stroke-linejoin="round" stroke-linecap="round" /><path d="M1149.0,651.0 L1164.0,638.0 L1199.0,637.0 L1244.0,645.0 L1274.0,653.0 L1294.0,658.0 L1304.0,663.0" fill="none" stroke="#d97aa2" stroke-width="4.6" stroke-linejoin="round" stroke-linecap="round" /><path d="M1299.0,708.0 L1282.0,735.0 L1282.0,848.0 L1289.0,868.0 L1281.0,890.0 L1276.0,908.0 L1289.0,928.0 L1296.0,945.0 L1299.0,980.0 L1294.0,997.0 L1259.0,1007.0 L1254.0,1030.0 L1259.0,1063.0" fill="none" stroke="#d97aa2" stroke-width="4.6" stroke-linejoin="round" stroke-linecap="round" /><path d="M1454.0,773.0 L1454.0,948.0 L1459.0,967.0 L1471.0,1025.0 L1474.0,1063.0" fill="none" stroke="#d97aa2" stroke-width="4.6" stroke-linejoin="round" stroke-linecap="round" /><path d="M1149.0,1012.0 L1209.0,1012.0 L1229.0,1004.0 L1289.0,1002.0 L1299.0,987.0 L1309.0,967.0 L1324.0,955.0 L1374.0,936.0 L1419.0,932.0 L1449.0,900.0 L1459.0,875.0 L1481.0,880.0 L1599.0,883.0 L1629.0,878.0" fill="none" stroke="#d97aa2" stroke-width="4.6" stroke-linejoin="round" stroke-linecap="round" /><path d="M1456.0,875.0 L1494.0,885.0 L1596.0,881.0 L1619.0,879.0 L1679.0,884.0 L1709.0,883.0 L1791.0,875.0 L1871.0,875.0" fill="none" stroke="#d97aa2" stroke-width="4.6" stroke-linejoin="round" stroke-linecap="round" /><path d="M1576.0,1063.0 L1604.0,1033.0 L1791.0,958.0 L1816.0,953.0 L1854.0,935.0 L1909.0,933.0" fill="none" stroke="#d97aa2" stroke-width="4.6" stroke-linejoin="round" stroke-linecap="round" /><path d="M1461.0,755.0 L1501.0,745.0" fill="none" stroke="#d97aa2" stroke-width="4.6" stroke-linejoin="round" stroke-linecap="round" /><path d="M1424.0,810.0 L1454.0,823.0" fill="none" stroke="#d97aa2" stroke-width="4.6" stroke-linejoin="round" stroke-linecap="round" /><path d="M1311.0,331.0 L1324.0,343.0 L1329.0,363.0 L1332.0,408.0 L1334.0,418.0" fill="none" stroke="#e783ab" stroke-width="3.4" stroke-linejoin="round" stroke-linecap="round" /><path d="M1480.0,138.0 L1484.0,188.0 L1494.0,225.0 L1511.0,258.0 L1521.0,283.0 L1522.0,333.0 L1504.0,353.0 L1501.0,378.0 L1509.0,403.0 L1529.0,430.0 L1531.0,470.0 L1529.0,530.0 L1527.0,590.0 L1520.0,630.0" fill="none" stroke="#e783ab" stroke-width="3.4" stroke-linejoin="round" stroke-linecap="round" /><path d="M1522.0,338.0 L1574.0,340.0 L1589.0,348.0 L1629.0,345.0 L1642.0,349.0" fill="none" stroke="#e783ab" stroke-width="3.4" stroke-linejoin="round" stroke-linecap="round" /><path d="M1614.0,313.0 L1642.0,349.0 L1650.0,380.0 L1667.0,408.0 L1689.0,453.0 L1691.0,500.0 L1684.0,520.0 L1676.0,563.0 L1679.0,588.0 L1694.0,600.0 L1704.0,628.0 L1706.0,678.0 L1716.0,710.0 L1741.0,733.0 L1784.0,768.0 L1819.0,793.0 L1831.0,818.0 L1834.0,838.0 L1854.0,853.0 L1856.0,928.0 L1874.0,930.0 L1876.0,1063.0" fill="none" stroke="#e783ab" stroke-width="3.4" stroke-linejoin="round" stroke-linecap="round" /><path d="M1149.0,500.0 L1184.0,502.0 L1289.0,518.0 L1324.0,530.0 L1369.0,555.0 L1406.0,590.0 L1484.0,615.0" fill="none" stroke="#e783ab" stroke-width="3.4" stroke-linejoin="round" stroke-linecap="round" /><path d="M1149.0,651.0 L1164.0,638.0 L1199.0,637.0 L1244.0,645.0 L1274.0,653.0 L1294.0,658.0 L1304.0,663.0" fill="none" stroke="#e783ab" stroke-width="3.4" stroke-linejoin="round" stroke-linecap="round" /><path d="M1299.0,708.0 L1282.0,735.0 L1282.0,848.0 L1289.0,868.0 L1281.0,890.0 L1276.0,908.0 L1289.0,928.0 L1296.0,945.0 L1299.0,980.0 L1294.0,997.0 L1259.0,1007.0 L1254.0,1030.0 L1259.0,1063.0" fill="none" stroke="#e783ab" stroke-width="3.4" stroke-linejoin="round" stroke-linecap="round" /><path d="M1454.0,773.0 L1454.0,948.0 L1459.0,967.0 L1471.0,1025.0 L1474.0,1063.0" fill="none" stroke="#e783ab" stroke-width="3.4" stroke-linejoin="round" stroke-linecap="round" /><path d="M1149.0,1012.0 L1209.0,1012.0 L1229.0,1004.0 L1289.0,1002.0 L1299.0,987.0 L1309.0,967.0 L1324.0,955.0 L1374.0,936.0 L1419.0,932.0 L1449.0,900.0 L1459.0,875.0 L1481.0,880.0 L1599.0,883.0 L1629.0,878.0" fill="none" stroke="#e783ab" stroke-width="3.4" stroke-linejoin="round" stroke-linecap="round" /><path d="M1456.0,875.0 L1494.0,885.0 L1596.0,881.0 L1619.0,879.0 L1679.0,884.0 L1709.0,883.0 L1791.0,875.0 L1871.0,875.0" fill="none" stroke="#e783ab" stroke-width="3.4" stroke-linejoin="round" stroke-linecap="round" /><path d="M1576.0,1063.0 L1604.0,1033.0 L1791.0,958.0 L1816.0,953.0 L1854.0,935.0 L1909.0,933.0" fill="none" stroke="#e783ab" stroke-width="3.4" stroke-linejoin="round" stroke-linecap="round" /><path d="M1461.0,755.0 L1501.0,745.0" fill="none" stroke="#e783ab" stroke-width="3.4" stroke-linejoin="round" stroke-linecap="round" /><path d="M1424.0,810.0 L1454.0,823.0" fill="none" stroke="#e783ab" stroke-width="3.4" stroke-linejoin="round" stroke-linecap="round" /><path d="M1149.0,148.0 L1164.0,153.0 L1174.0,168.0 L1175.0,233.0 L1181.0,253.0 L1199.0,268.0 L1216.0,275.0 L1234.0,298.0 L1266.0,318.0 L1284.0,330.0 L1311.0,331.0" fill="none" stroke="#ec9582" stroke-width="5.0" stroke-linejoin="round" stroke-linecap="round" /><path d="M1149.0,148.0 L1164.0,153.0 L1174.0,168.0 L1175.0,233.0 L1181.0,253.0 L1199.0,268.0 L1216.0,275.0 L1234.0,298.0 L1266.0,318.0 L1284.0,330.0 L1311.0,331.0" fill="none" stroke="#f5a893" stroke-width="3.8" stroke-linejoin="round" stroke-linecap="round" /><rect x="1343.0" y="217.5" width="20" height="11" rx="5.5" fill="#f4f4ee" stroke="#333" stroke-width="0.9"/><text x="1353" y="226.3" font-size="9" fill="#222" text-anchor="middle">83</text><rect x="1419.0" y="192.5" width="20" height="11" rx="5.5" fill="#f4f4ee" stroke="#333" stroke-width="0.9"/><text x="1429" y="201.3" font-size="9" fill="#222" text-anchor="middle">21</text><rect x="1531.0" y="235.5" width="20" height="11" rx="5.5" fill="#f4f4ee" stroke="#333" stroke-width="0.9"/><text x="1541" y="244.3" font-size="9" fill="#222" text-anchor="middle">22</text><rect x="1272.0" y="352.5" width="20" height="11" rx="5.5" fill="#f4f4ee" stroke="#333" stroke-width="0.9"/><text x="1282" y="361.3" font-size="9" fill="#222" text-anchor="middle">68</text><rect x="1564.0" y="354.5" width="20" height="11" rx="5.5" fill="#f4f4ee" stroke="#333" stroke-width="0.9"/><text x="1574" y="363.3" font-size="9" fill="#222" text-anchor="middle">68</text><rect x="1218.0" y="478.5" width="20" height="11" rx="5.5" fill="#f4f4ee" stroke="#333" stroke-width="0.9"/><text x="1228" y="487.3" font-size="9" fill="#222" text-anchor="middle">62</text><rect x="1371.0" y="528.5" width="20" height="11" rx="5.5" fill="#f4f4ee" stroke="#333" stroke-width="0.9"/><text x="1381" y="537.3" font-size="9" fill="#222" text-anchor="middle">58</text><rect x="1365.0" y="574.5" width="20" height="11" rx="5.5" fill="#f4f4ee" stroke="#333" stroke-width="0.9"/><text x="1375" y="583.3" font-size="9" fill="#222" text-anchor="middle">72</text><rect x="1272.0" y="647.5" width="24" height="11" rx="5.5" fill="#f4f4ee" stroke="#333" stroke-width="0.9"/><text x="1284" y="656.3" font-size="9" fill="#222" text-anchor="middle">390</text><rect x="1237.0" y="740.5" width="20" height="11" rx="5.5" fill="#f4f4ee" stroke="#333" stroke-width="0.9"/><text x="1247" y="749.3" font-size="9" fill="#222" text-anchor="middle">83</text><rect x="1458.0" y="718.5" width="20" height="11" rx="5.5" fill="#f4f4ee" stroke="#333" stroke-width="0.9"/><text x="1468" y="727.3" font-size="9" fill="#222" text-anchor="middle">19</text><rect x="1611.0" y="832.5" width="20" height="11" rx="5.5" fill="#f4f4ee" stroke="#333" stroke-width="0.9"/><text x="1621" y="841.3" font-size="9" fill="#222" text-anchor="middle">43</text><rect x="1715.0" y="804.5" width="20" height="11" rx="5.5" fill="#f4f4ee" stroke="#333" stroke-width="0.9"/><text x="1725" y="813.3" font-size="9" fill="#222" text-anchor="middle">64</text><rect x="1293.0" y="952.5" width="20" height="11" rx="5.5" fill="#f4f4ee" stroke="#333" stroke-width="0.9"/><text x="1303" y="961.3" font-size="9" fill="#222" text-anchor="middle">56</text><rect x="1315.0" y="491.5" width="20" height="11" rx="5.5" fill="#f4f4ee" stroke="#333" stroke-width="0.9"/><text x="1325" y="500.3" font-size="9" fill="#222" text-anchor="middle">53</text><rect x="1328.0" y="353.5" width="20" height="11" rx="5.5" fill="#f4f4ee" stroke="#333" stroke-width="0.9"/><text x="1338" y="362.3" font-size="9" fill="#222" text-anchor="middle">53</text><rect x="1292.5" y="326" width="19" height="10" rx="1" fill="#f4f4ee" stroke="#333" stroke-width="0.9"/><text x="1302" y="334.3" font-size="9" fill="#222" text-anchor="middle">A50</text><rect x="1580.5" y="328" width="19" height="10" rx="1" fill="#f4f4ee" stroke="#333" stroke-width="0.9"/><text x="1590" y="336.3" font-size="9" fill="#222" text-anchor="middle">A50</text><rect x="1370.5" y="953" width="15" height="10" rx="1" fill="#f4f4ee" stroke="#333" stroke-width="0.9"/><text x="1378" y="961.3" font-size="9" fill="#222" text-anchor="middle">15</text><rect x="1176.5" y="964" width="15" height="10" rx="1" fill="#f4f4ee" stroke="#333" stroke-width="0.9"/><text x="1184" y="972.3" font-size="9" fill="#222" text-anchor="middle">23</text><rect x="1207.5" y="678" width="15" height="10" rx="1" fill="#f4f4ee" stroke="#333" stroke-width="0.9"/><text x="1215" y="686.3" font-size="9" fill="#222" text-anchor="middle">4</text><path d="M1197,265 H1211 V273 Q1211,278 1204,278 Q1197,278 1197,273 Z" fill="#f4f4ee" stroke="#333" stroke-width="0.9"/><text x="1204" y="274.5" font-size="9" fill="#222" text-anchor="middle">12</text><path d="M1574,232 H1588 V240 Q1588,245 1581,245 Q1574,245 1574,240 Z" fill="#f4f4ee" stroke="#333" stroke-width="0.9"/><text x="1581" y="241.5" font-size="9" fill="#222" text-anchor="middle">41</text><path d="M1457,333 H1471 V341 Q1471,346 1464,346 Q1457,346 1457,341 Z" fill="#f4f4ee" stroke="#333" stroke-width="0.9"/><text x="1464" y="342.5" font-size="9" fill="#222" text-anchor="middle">45</text><path d="M1275,717 H1289 V725 Q1289,730 1282,730 Q1275,730 1275,725 Z" fill="#f4f4ee" stroke="#333" stroke-width="0.9"/><text x="1282" y="726.5" font-size="9" fill="#222" text-anchor="middle">20</text><path d="M1517,971 H1531 V979 Q1531,984 1524,984 Q1517,984 1517,979 Z" fill="#f4f4ee" stroke="#333" stroke-width="0.9"/><text x="1524" y="980.5" font-size="9" fill="#222" text-anchor="middle">12</text><path d="M1429,989 H1443 V997 Q1443,1002 1436,1002 Q1429,1002 1429,997 Z" fill="#f4f4ee" stroke="#333" stroke-width="0.9"/><text x="1436" y="998.5" font-size="9" fill="#222" text-anchor="middle">34</text><path d="M1694,515 H1708 V523 Q1708,528 1701,528 Q1694,528 1694,523 Z" fill="#f4f4ee" stroke="#333" stroke-width="0.9"/><text x="1701" y="524.5" font-size="9" fill="#222" text-anchor="middle">41</text><path d="M1519.0,455 Q1531,453 1543.0,455 Q1544.0,466 1531,471 Q1518.0,466 1519.0,455 Z" fill="#5b8fd0" stroke="#fff" stroke-width="1"/><rect x="1520.0" y="455" width="22" height="3" fill="#e05a3a"/><text x="1531" y="466.5" font-size="9" fill="#fff" text-anchor="middle" font-weight="bold">294</text><path d="M1444.0,831 Q1456,829 1468.0,831 Q1469.0,842 1456,847 Q1443.0,842 1444.0,831 Z" fill="#5b8fd0" stroke="#fff" stroke-width="1"/><rect x="1445.0" y="831" width="22" height="3" fill="#e05a3a"/><text x="1456" y="842.5" font-size="9" fill="#fff" text-anchor="middle" font-weight="bold">294</text><path d="M1446.0,884 Q1455,882 1464.0,884 Q1465.0,895 1455,900 Q1445.0,895 1446.0,884 Z" fill="#5b8fd0" stroke="#fff" stroke-width="1"/><rect x="1447.0" y="884" width="16" height="3" fill="#e05a3a"/><text x="1455" y="895.5" font-size="9" fill="#fff" text-anchor="middle" font-weight="bold">88</text><path d="M1275.0,848 Q1287,846 1299.0,848 Q1300.0,859 1287,864 Q1274.0,859 1275.0,848 Z" fill="#5b8fd0" stroke="#fff" stroke-width="1"/><rect x="1276.0" y="848" width="22" height="3" fill="#e05a3a"/><text x="1287" y="859.5" font-size="9" fill="#fff" text-anchor="middle" font-weight="bold">355</text><path d="M1709.0,875 Q1721,873 1733.0,875 Q1734.0,886 1721,891 Q1708.0,886 1709.0,875 Z" fill="#5b8fd0" stroke="#fff" stroke-width="1"/><rect x="1710.0" y="875" width="22" height="3" fill="#e05a3a"/><text x="1721" y="886.5" font-size="9" fill="#fff" text-anchor="middle" font-weight="bold">290</text><path d="M1411.0,792 Q1423,790 1435.0,792 Q1436.0,803 1423,808 Q1410.0,803 1411.0,792 Z" fill="#5b8fd0" stroke="#fff" stroke-width="1"/><rect x="1412.0" y="792" width="22" height="3" fill="#e05a3a"/><text x="1423" y="803.5" font-size="9" fill="#fff" text-anchor="middle" font-weight="bold">290</text><path d="M1858.0,965 Q1867,963 1876.0,965 Q1877.0,976 1867,981 Q1857.0,976 1858.0,965 Z" fill="#5b8fd0" stroke="#fff" stroke-width="1"/><rect x="1859.0" y="965" width="16" height="3" fill="#e05a3a"/><text x="1867" y="976.5" font-size="9" fill="#fff" text-anchor="middle" font-weight="bold">90</text><path d="M1682.0,488 Q1691,486 1700.0,488 Q1701.0,499 1691,504 Q1681.0,499 1682.0,488 Z" fill="#5b8fd0" stroke="#fff" stroke-width="1"/><rect x="1683.0" y="488" width="16" height="3" fill="#e05a3a"/><text x="1691" y="499.5" font-size="9" fill="#fff" text-anchor="middle" font-weight="bold">94</text><path d="M1286.0,503 Q1298,501 1310.0,503 Q1311.0,514 1298,519 Q1285.0,514 1286.0,503 Z" fill="#5b8fd0" stroke="#fff" stroke-width="1"/><rect x="1287.0" y="503" width="22" height="3" fill="#e05a3a"/><text x="1298" y="514.5" font-size="9" fill="#fff" text-anchor="middle" font-weight="bold">290</text><text x="1334" y="148" font-size="10.5" fill="#3b3f52" >Park</text><text x="1424" y="166" font-size="10.5" fill="#3b3f52" >Mettawa</text><text x="1553" y="147" font-size="10.5" fill="#3b3f52" >Forest</text><text x="1363" y="193" font-size="10.5" fill="#3b3f52" >Vernon</text><text x="1371" y="204" font-size="10.5" fill="#3b3f52" >Hills</text><text x="1237" y="204" font-size="10.5" fill="#3b3f52" >Hawthorn</text><text x="1245" y="215" font-size="10.5" fill="#3b3f52" >Woods</text><text x="1193" y="241" font-size="10.5" fill="#3b3f52" >Lake</text><text x="1189" y="252" font-size="10.5" fill="#3b3f52" >Zurich</text><text x="1411" y="242" font-size="10.5" fill="#3b3f52" >Lincolnshire</text><text x="1373" y="258" font-size="10.5" fill="#3b3f52" >Carlyle of</text><text x="1363" y="269" font-size="10.5" fill="#3b3f52" >Buffalo Grove</text><text x="1329" y="280" font-size="10.5" fill="#3b3f52" >Long</text><text x="1326" y="291" font-size="10.5" fill="#3b3f52" >Grove</text><text x="1362" y="282" font-size="10.5" fill="#3b3f52" >Westchester</text><text x="1375" y="293" font-size="10.5" fill="#3b3f52" >Estates</text><text x="1228" y="297" font-size="10.5" fill="#3b3f52" >Kildeer</text><text x="1193" y="297" font-size="10.5" fill="#3b3f52" >Deer</text><text x="1193" y="308" font-size="10.5" fill="#3b3f52" >Park</text><text x="1367" y="309" font-size="10.5" fill="#3b3f52" >Cherbourg</text><text x="1460" y="325" font-size="10.5" fill="#3b3f52" >Riverwoods</text><text x="1500" y="258" font-size="10.5" fill="#3b3f52" >Bannockburn</text><text x="1538" y="307" font-size="10.5" fill="#3b3f52" >Deerfield</text><text x="1607" y="209" font-size="10.5" fill="#3b3f52" >Fort</text><text x="1595" y="220" font-size="10.5" fill="#3b3f52" >Sheridan</text><text x="1592" y="242" font-size="10.5" fill="#3b3f52" >Highwood</text><text x="1149" y="336" font-size="10.5" fill="#3b3f52" >ton</text><text x="1201" y="393" font-size="10.5" fill="#3b3f52" >Inverness</text><text x="1673" y="368" font-size="10.5" fill="#3b3f52" >Glencoe</text><text x="1648" y="432" font-size="10.5" fill="#3b3f52" >Northfield</text><text x="1702" y="430" font-size="10.5" fill="#3b3f52" >Winnetka</text><text x="1722" y="468" font-size="10.5" fill="#3b3f52" >Kenilworth</text><text x="1742" y="490" font-size="10.5" fill="#3b3f52" >Wilmette</text><text x="1642" y="565" font-size="10.5" fill="#3b3f52" >Grove</text><text x="1694" y="625" font-size="10.5" fill="#3b3f52" >Lincolnwood</text><text x="1731" y="661" font-size="10.5" fill="#3b3f52" >North</text><text x="1734" y="673" font-size="10.5" fill="#3b3f52" >Park</text><text x="1789" y="673" font-size="10.5" fill="#3b3f52" >Andersonville</text><text x="1634" y="523" font-size="10.5" fill="#3b3f52" >Golf</text><text x="1408" y="442" font-size="10.5" fill="#3b3f52" >Prospect</text><text x="1411" y="453" font-size="10.5" fill="#3b3f52" >Heights</text><text x="1281" y="472" font-size="10.5" fill="#3b3f52" >Rolling</text><text x="1274" y="484" font-size="10.5" fill="#3b3f52" >Meadows</text><text x="1208" y="664" font-size="10.5" fill="#3b3f52" >Roselle</text><text x="1294" y="694" font-size="10.5" fill="#3b3f52" >Itasca</text><text x="1355" y="692" font-size="10.5" fill="#3b3f52" >Wood</text><text x="1358" y="703" font-size="10.5" fill="#3b3f52" >Dale</text><text x="1397" y="720" font-size="10.5" fill="#3b3f52" >Bensenville</text><text x="1187" y="733" font-size="10.5" fill="#3b3f52" >Bloomingdale</text><text x="1461" y="819" font-size="10.5" fill="#3b3f52" >Northlake</text><text x="1358" y="845" font-size="10.5" fill="#3b3f52" >Villa</text><text x="1358" y="856" font-size="10.5" fill="#3b3f52" >Park</text><text x="1540" y="705" font-size="10.5" fill="#3b3f52" >O'Hare</text><text x="1515" y="723" font-size="10.5" fill="#3b3f52" >Schiller</text><text x="1522" y="734" font-size="10.5" fill="#3b3f52" >Park</text><text x="1518" y="755" font-size="10.5" fill="#3b3f52" >Franklin</text><text x="1524" y="766" font-size="10.5" fill="#3b3f52" >Park</text><text x="1579" y="777" font-size="10.5" fill="#3b3f52" >Elmwood</text><text x="1590" y="788" font-size="10.5" fill="#3b3f52" >Park</text><text x="1550" y="858" font-size="10.5" fill="#3b3f52" >Maywood</text><text x="1455" y="871" font-size="10.5" fill="#3b3f52" >Hillside</text><text x="1229" y="878" font-size="10.5" fill="#3b3f52" >Glen</text><text x="1230" y="889" font-size="10.5" fill="#3b3f52" >Ellyn</text><text x="1593" y="873" font-size="10.5" fill="#3b3f52" >Forest</text><text x="1598" y="884" font-size="10.5" fill="#3b3f52" >Park</text><text x="1481" y="904" font-size="10.5" fill="#3b3f52" >Westchester</text><text x="1559" y="904" font-size="10.5" fill="#3b3f52" >Hines</text><text x="1365" y="916" font-size="10.5" fill="#3b3f52" >Oakbrook</text><text x="1370" y="927" font-size="10.5" fill="#3b3f52" >Terrace</text><text x="1595" y="705" font-size="10.5" fill="#3b3f52" >Harwood</text><text x="1598" y="716" font-size="10.5" fill="#3b3f52" >Heights</text><text x="1802" y="706" font-size="10.5" fill="#3b3f52" >Uptown</text><text x="1799" y="738" font-size="10.5" fill="#3b3f52" >Roscoe</text><text x="1791" y="749" font-size="10.5" fill="#3b3f52" >Village Lake</text><text x="1826" y="760" font-size="10.5" fill="#3b3f52" >View</text><text x="1640" y="777" font-size="10.5" fill="#3b3f52" >Belmont</text><text x="1643" y="787" font-size="10.5" fill="#3b3f52" >Central</text><text x="1746" y="782" font-size="10.5" fill="#3b3f52" >Logan</text><text x="1744" y="793" font-size="10.5" fill="#3b3f52" >Square</text><text x="1789" y="797" font-size="10.5" fill="#3b3f52" >Bucktown</text><text x="1621" y="808" font-size="10.5" fill="#3b3f52" >Galewood</text><text x="1720" y="829" font-size="10.5" fill="#3b3f52" >Humboldt</text><text x="1736" y="840" font-size="10.5" fill="#3b3f52" >Park</text><text x="1802" y="829" font-size="10.5" fill="#3b3f52" >East</text><text x="1797" y="840" font-size="10.5" fill="#3b3f52" >Village</text><text x="1838" y="824" font-size="10.5" fill="#3b3f52" >Old Town</text><text x="1657" y="846" font-size="10.5" fill="#3b3f52" >Austin</text><text x="1657" y="857" font-size="10.5" fill="#3b3f52" >Village</text><text x="1754" y="868" font-size="10.5" fill="#3b3f52" >East</text><text x="1745" y="879" font-size="10.5" fill="#3b3f52" >Garfield</text><text x="1754" y="890" font-size="10.5" fill="#3b3f52" >Park</text><text x="1730" y="904" font-size="10.5" fill="#3b3f52" >Lawndale</text><text x="1843" y="926" font-size="10.5" fill="#3b3f52" >Chinatown</text><text x="1743" y="937" font-size="10.5" fill="#3b3f52" >Little</text><text x="1741" y="948" font-size="10.5" fill="#3b3f52" >Village</text><text x="1391" y="964" font-size="10.5" fill="#3b3f52" >Oak Brook</text><text x="1543" y="985" font-size="10.5" fill="#3b3f52" >Brookfield</text><text x="1504" y="1000" font-size="10.5" fill="#3b3f52" >La Grange</text><text x="1149" y="994" font-size="10.5" fill="#3b3f52" >Danada</text><text x="1150" y="1005" font-size="10.5" fill="#3b3f52" >Woods</text><text x="1223" y="1032" font-size="10.5" fill="#3b3f52" >Lisle</text><text x="1424" y="1022" font-size="10.5" fill="#3b3f52" >Hinsdale</text><text x="1559" y="1033" font-size="10.5" fill="#3b3f52" >McCook</text><text x="1515" y="1048" font-size="10.5" fill="#3b3f52" >Countryside</text><text x="1594" y="1049" font-size="10.5" fill="#3b3f52" >Summit</text><text x="1600" y="1060" font-size="10.5" fill="#3b3f52" >Argo</text><text x="1149" y="1027" font-size="10.5" fill="#3b3f52" >Ogden</text><text x="1152" y="1039" font-size="10.5" fill="#3b3f52" >Mall</text><text x="1855" y="952" font-size="10.5" fill="#3b3f52" >Armour</text><text x="1856" y="963" font-size="10.5" fill="#3b3f52" >Square</text><text x="1792" y="969" font-size="10.5" fill="#3b3f52" >McKinley</text><text x="1802" y="980" font-size="10.5" fill="#3b3f52" >Park</text><text x="1628" y="985" font-size="10.5" fill="#3b3f52" >Stickney</text><text x="1617" y="1005" font-size="10.5" fill="#3b3f52" >Forest</text><text x="1622" y="1016" font-size="10.5" fill="#3b3f52" >View</text><text x="1721" y="1001" font-size="10.5" fill="#3b3f52" >Archer</text><text x="1718" y="1012" font-size="10.5" fill="#3b3f52" >Heights</text><text x="1801" y="1001" font-size="10.5" fill="#3b3f52" >Back of the</text><text x="1815" y="1012" font-size="10.5" fill="#3b3f52" >Yards</text><text x="1874" y="1006" font-size="10.5" fill="#3b3f52" >Grand</text><text x="1864" y="1017" font-size="10.5" fill="#3b3f52" >Boulevard</text><text x="1653" y="1039" font-size="10.5" fill="#3b3f52" >Garfield</text><text x="1659" y="1050" font-size="10.5" fill="#3b3f52" >Ridge</text><text x="1729" y="1039" font-size="10.5" fill="#3b3f52" >West</text><text x="1725" y="1050" font-size="10.5" fill="#3b3f52" >Elsdon</text><text x="1768" y="1033" font-size="10.5" fill="#3b3f52" >Gage</text><text x="1772" y="1044" font-size="10.5" fill="#3b3f52" >Park</text><text x="1808" y="1063" font-size="10.5" fill="#3b3f52" >West</text><text x="1894" y="980" font-size="10.5" fill="#3b3f52" >Oak</text><text x="1149" y="796" font-size="10.5" fill="#3b3f52" >Carol</text><text x="1149" y="809" font-size="10.5" fill="#3b3f52" >Stream</text><text x="1364" y="327" font-size="13" fill="#3b3f52" >Buffalo</text><text x="1368" y="340" font-size="13" fill="#3b3f52" >Grove</text><text x="1434" y="363" font-size="13" fill="#3b3f52" >Wheeling</text><text x="1551" y="384" font-size="13" fill="#3b3f52" >Northbrook</text><text x="1603" y="269" font-size="13" fill="#3b3f52" >Highland</text><text x="1617" y="282" font-size="13" fill="#3b3f52" >Park</text><text x="1262" y="412" font-size="13" fill="#3b3f52" >Palatine</text><text x="1337" y="464" font-size="13" fill="#3b3f52" >Arlington</text><text x="1342" y="477" font-size="13" fill="#3b3f52" >Heights</text><text x="1398" y="507" font-size="13" fill="#3b3f52" >Mt Prospect</text><text x="1149" y="509" font-size="13" fill="#3b3f52" >ffman</text><text x="1149" y="522" font-size="13" fill="#3b3f52" >tates</text><text x="1205" y="587" font-size="13" fill="#3b3f52" >Schaumburg</text><text x="1298" y="620" font-size="13" fill="#3b3f52" >Elk Grove</text><text x="1305" y="632" font-size="13" fill="#3b3f52" >Village</text><text x="1467" y="551" font-size="13" fill="#3b3f52" >Des</text><text x="1607" y="485" font-size="13" fill="#3b3f52" >Glenview</text><text x="1766" y="527" font-size="13" fill="#3b3f52" >Evanston</text><text x="1674" y="589" font-size="13" fill="#3b3f52" >Skokie</text><text x="1326" y="767" font-size="13" fill="#3b3f52" >Addison</text><text x="1204" y="790" font-size="13" fill="#3b3f52" >Glendale</text><text x="1206" y="803" font-size="13" fill="#3b3f52" >Heights</text><text x="1400" y="825" font-size="13" fill="#3b3f52" >Elmhurst</text><text x="1295" y="894" font-size="13" fill="#3b3f52" >Lombard</text><text x="1151" y="897" font-size="13" fill="#3b3f52" >Wheaton</text><text x="1634" y="874" font-size="13" fill="#3b3f52" >Oak Park</text><text x="1686" y="927" font-size="13" fill="#3b3f52" >Cicero</text><text x="1620" y="947" font-size="13" fill="#3b3f52" >Berwyn</text><text x="1303" y="1034" font-size="13" fill="#3b3f52" >Downers</text><text x="1313" y="1046" font-size="13" fill="#3b3f52" >Grove</text><text x="1834" y="867" font-size="23" fill="#3b3f52" textLength="78" lengthAdjust="spacingAndGlyphs">Chicago</text><text x="1501" y="400" font-size="10.5" fill="#3a78c0" font-style="italic">Des Plaines</text><text x="1516" y="412" font-size="10.5" fill="#3a78c0" font-style="italic">River</text><text x="1651" y="383" font-size="10.5" fill="#3a78c0" >Skokie</text><text x="1648" y="395" font-size="10.5" fill="#3a78c0" >Lagoons</text><text x="1767" y="567" font-size="10.5" fill="#3a78c0" font-style="italic">Channel</text><text x="1427" y="923" font-size="10.5" fill="#3a78c0" font-style="italic">Salt</text><text x="1423" y="935" font-size="10.5" fill="#3a78c0" font-style="italic">Creek</text><text x="1165" y="646" font-size="10.5" fill="#3b3f52" transform="rotate(-12 1165 646)">Elgin</text><text x="1194" y="641" font-size="10.5" fill="#3b3f52" transform="rotate(8 1194 641)">OHare</text><text x="1229" y="648" font-size="10.5" fill="#3b3f52" transform="rotate(10 1229 648)">Expy E</text><text x="1481" y="148" font-size="10.5" fill="#3b3f52" transform="rotate(77 1481 148)">Tri-State Tollway</text><text x="1329" y="350" font-size="8.5" fill="#222" >EXT</text><text x="1500" y="664" font-size="10.5" fill="#3b3f52" >ORD</text><text x="1600" y="664" font-size="10.5" fill="#3b3f52" >Norwood</text><path d="M1431.5,525.5 L1432.7,471.7 L1374.0,416.7 L1335.2,416.7 L1309.0,433.0 L1294.0,453.0 L1292.0,480.0 L1297.7,495.5 L1296.5,535.5 L1295.2,561.7 L1221.5,544.2 L1220.2,578.0 L1279.0,575.5 L1291.5,580.5 L1291.5,628.0 L1335.2,626.7" fill="none" stroke="#1a1a1a" stroke-width="8.4" stroke-linejoin="miter" stroke-miterlimit="3"/><path d="M1431.5,525.5 L1432.7,471.7 L1374.0,416.7 L1335.2,416.7 L1309.0,433.0 L1294.0,453.0 L1292.0,480.0 L1297.7,495.5 L1296.5,535.5 L1295.2,561.7 L1221.5,544.2 L1220.2,578.0 L1279.0,575.5 L1291.5,580.5 L1291.5,628.0 L1335.2,626.7" fill="none" stroke="#8b3765" stroke-width="6.2" stroke-linejoin="miter" stroke-miterlimit="3"/><path d="M1423.2,521.0 L1423.2,559.2 L1452.7,559.2 L1452.7,586.7 L1500.0,586.0" fill="none" stroke="#1a1a1a" stroke-width="8.4" stroke-linejoin="miter" stroke-miterlimit="3"/><path d="M1423.2,521.0 L1423.2,559.2 L1452.7,559.2 L1452.7,586.7 L1500.0,586.0" fill="none" stroke="#8b3765" stroke-width="6.2" stroke-linejoin="miter" stroke-miterlimit="3"/><path d="M1301.5,628.0 L1302.7,678.0 L1299.0,708.0 L1309.0,718.0 L1354.0,743.0 L1369.0,760.5 L1381.5,771.7 L1404.0,776.7 L1414.0,783.0 L1421.5,795.5 L1424.0,794.0 L1424.0,764.2 L1451.5,764.2" fill="none" stroke="#1a1a1a" stroke-width="8.4" stroke-linejoin="miter" stroke-miterlimit="3"/><path d="M1301.5,628.0 L1302.7,678.0 L1299.0,708.0 L1309.0,718.0 L1354.0,743.0 L1369.0,760.5 L1381.5,771.7 L1404.0,776.7 L1414.0,783.0 L1421.5,795.5 L1424.0,794.0 L1424.0,764.2 L1451.5,764.2" fill="none" stroke="#8b3765" stroke-width="6.2" stroke-linejoin="miter" stroke-miterlimit="3"/><path d="M1455.2,773.0 L1419.0,841.7" fill="none" stroke="#0c2b2b" stroke-width="10.2" stroke-linejoin="miter" stroke-miterlimit="3"/><path d="M1455.2,773.0 L1419.0,841.7" fill="none" stroke="#1d6262" stroke-width="8" stroke-linejoin="miter" stroke-miterlimit="3"/><path d="M1454.0,767.0 L1508.0,768.0 L1506.0,716.0 L1519.0,697.0 L1515.0,672.0 L1523.0,664.0 L1576.5,663.0 L1649.0,668.0 L1646.5,633.0 L1661.5,636.7 L1681.5,640.5 L1699.0,653.0 L1706.5,678.0 L1704.0,703.0 L1716.5,710.5 L1741.5,733.0 L1751.5,745.5 L1766.5,755.5 L1779.0,766.7 L1794.0,766.7 L1791.5,678.0 L1784.0,668.0 L1774.0,658.0 L1755.2,643.0 L1756.5,594.2 L1814.0,594.2 L1809.0,570.5 L1806.5,550.5 L1641.5,551.7" fill="none" stroke="#f9a11b" stroke-width="8.5" stroke-linejoin="miter" stroke-miterlimit="3"/><path d="M1630.2,525.5 L1629.0,474.2 L1601.5,476.0" fill="none" stroke="#f9a11b" stroke-width="8.5" stroke-linejoin="miter" stroke-miterlimit="3"/><path d="M-5.4,-3.5100000000000002 L5.4,0 L-5.4,3.5100000000000002 L-2.7,0 Z" fill="#fff" transform="translate(1340 417) rotate(0)"/><path d="M-5.4,-3.5100000000000002 L5.4,0 L-5.4,3.5100000000000002 L-2.7,0 Z" fill="#fff" transform="translate(1370 417) rotate(0)"/><path d="M-5.4,-3.5100000000000002 L5.4,0 L-5.4,3.5100000000000002 L-2.7,0 Z" fill="#fff" transform="translate(1405 445) rotate(43)"/><path d="M-5.4,-3.5100000000000002 L5.4,0 L-5.4,3.5100000000000002 L-2.7,0 Z" fill="#fff" transform="translate(1432 495) rotate(90)"/><path d="M-5.4,-3.5100000000000002 L5.4,0 L-5.4,3.5100000000000002 L-2.7,0 Z" fill="#fff" transform="translate(1435 559) rotate(0)"/><path d="M-5.4,-3.5100000000000002 L5.4,0 L-5.4,3.5100000000000002 L-2.7,0 Z" fill="#fff" transform="translate(1452 575) rotate(90)"/><path d="M-5.4,-3.5100000000000002 L5.4,0 L-5.4,3.5100000000000002 L-2.7,0 Z" fill="#fff" transform="translate(1297 520) rotate(-90)"/><path d="M-5.4,-3.5100000000000002 L5.4,0 L-5.4,3.5100000000000002 L-2.7,0 Z" fill="#fff" transform="translate(1295 470) rotate(-90)"/><path d="M-5.4,-3.5100000000000002 L5.4,0 L-5.4,3.5100000000000002 L-2.7,0 Z" fill="#fff" transform="translate(1318 428) rotate(-35)"/><path d="M-5.4,-3.5100000000000002 L5.4,0 L-5.4,3.5100000000000002 L-2.7,0 Z" fill="#fff" transform="translate(1245 549) rotate(12)"/><path d="M-5.4,-3.5100000000000002 L5.4,0 L-5.4,3.5100000000000002 L-2.7,0 Z" fill="#fff" transform="translate(1280 555) rotate(12)"/><path d="M-5.4,-3.5100000000000002 L5.4,0 L-5.4,3.5100000000000002 L-2.7,0 Z" fill="#fff" transform="translate(1250 576) rotate(180)"/><path d="M-5.4,-3.5100000000000002 L5.4,0 L-5.4,3.5100000000000002 L-2.7,0 Z" fill="#fff" transform="translate(1285 578) rotate(30)"/><path d="M-5.4,-3.5100000000000002 L5.4,0 L-5.4,3.5100000000000002 L-2.7,0 Z" fill="#fff" transform="translate(1292 603) rotate(90)"/><path d="M-5.4,-3.5100000000000002 L5.4,0 L-5.4,3.5100000000000002 L-2.7,0 Z" fill="#fff" transform="translate(1318 627) rotate(0)"/><path d="M-5.4,-3.5100000000000002 L5.4,0 L-5.4,3.5100000000000002 L-2.7,0 Z" fill="#fff" transform="translate(1302 650) rotate(-90)"/><path d="M-5.4,-3.5100000000000002 L5.4,0 L-5.4,3.5100000000000002 L-2.7,0 Z" fill="#fff" transform="translate(1301 690) rotate(-90)"/><path d="M-5.4,-3.5100000000000002 L5.4,0 L-5.4,3.5100000000000002 L-2.7,0 Z" fill="#fff" transform="translate(1330 729) rotate(210)"/><path d="M-5.4,-3.5100000000000002 L5.4,0 L-5.4,3.5100000000000002 L-2.7,0 Z" fill="#fff" transform="translate(1360 745) rotate(210)"/><path d="M-5.4,-3.5100000000000002 L5.4,0 L-5.4,3.5100000000000002 L-2.7,0 Z" fill="#fff" transform="translate(1392 774) rotate(180)"/><path d="M-5.4,-3.5100000000000002 L5.4,0 L-5.4,3.5100000000000002 L-2.7,0 Z" fill="#fff" transform="translate(1424 780) rotate(90)"/><path d="M-5.4,-3.5100000000000002 L5.4,0 L-5.4,3.5100000000000002 L-2.7,0 Z" fill="#fff" transform="translate(1438 764) rotate(180)"/><path d="M-5.4,-3.5100000000000002 L5.4,0 L-5.4,3.5100000000000002 L-2.7,0 Z" fill="#fff" transform="translate(1446 783) rotate(115)"/><path d="M-5.4,-3.5100000000000002 L5.4,0 L-5.4,3.5100000000000002 L-2.7,0 Z" fill="#fff" transform="translate(1466 767) rotate(0)"/><path d="M-5.4,-3.5100000000000002 L5.4,0 L-5.4,3.5100000000000002 L-2.7,0 Z" fill="#fff" transform="translate(1507 738) rotate(-90)"/><path d="M-5.4,-3.5100000000000002 L5.4,0 L-5.4,3.5100000000000002 L-2.7,0 Z" fill="#fff" transform="translate(1540 664) rotate(0)"/><path d="M-5.4,-3.5100000000000002 L5.4,0 L-5.4,3.5100000000000002 L-2.7,0 Z" fill="#fff" transform="translate(1615 666) rotate(0)"/><path d="M-5.4,-3.5100000000000002 L5.4,0 L-5.4,3.5100000000000002 L-2.7,0 Z" fill="#fff" transform="translate(1660 637) rotate(0)"/><path d="M-5.4,-3.5100000000000002 L5.4,0 L-5.4,3.5100000000000002 L-2.7,0 Z" fill="#fff" transform="translate(1702 665) rotate(80)"/><path d="M-5.4,-3.5100000000000002 L5.4,0 L-5.4,3.5100000000000002 L-2.7,0 Z" fill="#fff" transform="translate(1735 725) rotate(35)"/><path d="M-5.4,-3.5100000000000002 L5.4,0 L-5.4,3.5100000000000002 L-2.7,0 Z" fill="#fff" transform="translate(1770 758) rotate(35)"/><path d="M-5.4,-3.5100000000000002 L5.4,0 L-5.4,3.5100000000000002 L-2.7,0 Z" fill="#fff" transform="translate(1791 710) rotate(-90)"/><path d="M-5.4,-3.5100000000000002 L5.4,0 L-5.4,3.5100000000000002 L-2.7,0 Z" fill="#fff" transform="translate(1770 650) rotate(215)"/><path d="M-5.4,-3.5100000000000002 L5.4,0 L-5.4,3.5100000000000002 L-2.7,0 Z" fill="#fff" transform="translate(1790 594) rotate(0)"/><path d="M-5.4,-3.5100000000000002 L5.4,0 L-5.4,3.5100000000000002 L-2.7,0 Z" fill="#fff" transform="translate(1720 552) rotate(180)"/><path d="M-5.4,-3.5100000000000002 L5.4,0 L-5.4,3.5100000000000002 L-2.7,0 Z" fill="#fff" transform="translate(1665 552) rotate(180)"/><path d="M-5.4,-3.5100000000000002 L5.4,0 L-5.4,3.5100000000000002 L-2.7,0 Z" fill="#fff" transform="translate(1760 552) rotate(180)"/><path d="M-5.4,-3.5100000000000002 L5.4,0 L-5.4,3.5100000000000002 L-2.7,0 Z" fill="#fff" transform="translate(1630 500) rotate(-90)"/><path d="M-5.4,-3.5100000000000002 L5.4,0 L-5.4,3.5100000000000002 L-2.7,0 Z" fill="#fff" transform="translate(1615 475) rotate(180)"/><path d="M1346.2,399.5 A9.6,9.6 0 1 1 1364.8,399.5 L1355.5,415.5 Z" fill="#8b3765" stroke="#1a1a1a" stroke-width="0.9"/><circle cx="1355.5" cy="397" r="6.8" fill="#000"/><text x="1355.5" y="400.8" font-size="10.5" font-weight="bold" fill="#fff" text-anchor="middle">5</text><path d="M1413.9,523.5 A9.6,9.6 0 1 1 1432.5,523.5 L1423.2,539.5 Z" fill="#8b3765" stroke="#1a1a1a" stroke-width="0.9"/><circle cx="1423.2" cy="521" r="6.8" fill="#000"/><text x="1423.2" y="524.8" font-size="10.5" font-weight="bold" fill="#fff" text-anchor="middle">6</text><path d="M1257.9,538.0 A9.6,9.6 0 1 1 1276.5,538.0 L1267.2,554.0 Z" fill="#8b3765" stroke="#1a1a1a" stroke-width="0.9"/><circle cx="1267.2" cy="535.5" r="6.8" fill="#000"/><text x="1267.2" y="539.3" font-size="10.5" font-weight="bold" fill="#fff" text-anchor="middle">4</text><path d="M1210.9,568.7 A9.6,9.6 0 1 1 1229.5,568.7 L1220.2,584.7 Z" fill="#8b3765" stroke="#1a1a1a" stroke-width="0.9"/><circle cx="1220.2" cy="566.2" r="6.8" fill="#000"/><text x="1220.2" y="570.0" font-size="10.5" font-weight="bold" fill="#fff" text-anchor="middle">3</text><path d="M1319.7,602.2 A9.6,9.6 0 1 1 1338.3,602.2 L1329,618.2 Z" fill="#8b3765" stroke="#1a1a1a" stroke-width="0.9"/><circle cx="1329" cy="599.7" r="6.8" fill="#000"/><text x="1329" y="603.5" font-size="10.5" font-weight="bold" fill="#fff" text-anchor="middle">2</text><path d="M1477.7,568.5 A9.6,9.6 0 1 1 1496.3,568.5 L1487,584.5 Z" fill="#8b3765" stroke="#1a1a1a" stroke-width="0.9"/><circle cx="1487" cy="566" r="6.8" fill="#000"/><text x="1487" y="569.8" font-size="10.5" font-weight="bold" fill="#fff" text-anchor="middle">7</text><path d="M1445.2,759.1 A9.6,9.6 0 1 1 1463.8,759.1 L1454.5,775.1 Z" fill="#f9a11b" stroke="#111" stroke-width="1.1"/><circle cx="1454.5" cy="756.6" r="6.6" fill="#fff" stroke="#111" stroke-width="0.9"/><text x="1454.5" y="760.2" font-size="10" fill="#111" text-anchor="middle" font-family="Liberation Serif, serif">1</text><path d="M1637.2,623.0 A9.6,9.6 0 1 1 1655.8,623.0 L1646.5,639.0 Z" fill="#f9a11b" stroke="#111" stroke-width="1.1"/><circle cx="1646.5" cy="620.5" r="6.6" fill="#fff" stroke="#111" stroke-width="0.9"/><text x="1646.5" y="624.1" font-size="10" fill="#111" text-anchor="middle" font-family="Liberation Serif, serif">2</text><path d="M1780.9,727.2 A9.6,9.6 0 1 1 1799.5,727.2 L1790.2,743.2 Z" fill="#f9a11b" stroke="#111" stroke-width="1.1"/><circle cx="1790.2" cy="724.7" r="6.6" fill="#fff" stroke="#111" stroke-width="0.9"/><text x="1790.2" y="728.3000000000001" font-size="10" fill="#111" text-anchor="middle" font-family="Liberation Serif, serif">3</text><path d="M1774.7,660.5 A9.6,9.6 0 1 1 1793.3,660.5 L1784,676.5 Z" fill="#f9a11b" stroke="#111" stroke-width="1.1"/><circle cx="1784" cy="658" r="6.6" fill="#fff" stroke="#111" stroke-width="0.9"/><text x="1784" y="661.6" font-size="10" fill="#111" text-anchor="middle" font-family="Liberation Serif, serif">4</text><path d="M1746.7,605.0 A9.6,9.6 0 1 1 1765.3,605.0 L1756,621.0 Z" fill="#f9a11b" stroke="#111" stroke-width="1.1"/><circle cx="1756" cy="602.5" r="6.6" fill="#fff" stroke="#111" stroke-width="0.9"/><text x="1756" y="606.1" font-size="10" fill="#111" text-anchor="middle" font-family="Liberation Serif, serif">5</text><path d="M1799.7,576.7 A9.6,9.6 0 1 1 1818.3,576.7 L1809,592.7 Z" fill="#f9a11b" stroke="#111" stroke-width="1.1"/><circle cx="1809" cy="574.2" r="6.6" fill="#fff" stroke="#111" stroke-width="0.9"/><text x="1809" y="577.8000000000001" font-size="10" fill="#111" text-anchor="middle" font-family="Liberation Serif, serif">6</text><path d="M1764.7,534.2 A9.6,9.6 0 1 1 1783.3,534.2 L1774,550.2 Z" fill="#f9a11b" stroke="#111" stroke-width="1.1"/><circle cx="1774" cy="531.7" r="6.6" fill="#fff" stroke="#111" stroke-width="0.9"/><text x="1774" y="535.3000000000001" font-size="10" fill="#111" text-anchor="middle" font-family="Liberation Serif, serif">7</text><path d="M1619.7,533.0 A9.6,9.6 0 1 1 1638.3,533.0 L1629,549.0 Z" fill="#f9a11b" stroke="#111" stroke-width="1.1"/><circle cx="1629" cy="530.5" r="6.6" fill="#fff" stroke="#111" stroke-width="0.9"/><text x="1629" y="534.1" font-size="10" fill="#111" text-anchor="middle" font-family="Liberation Serif, serif">8</text><path d="M1593.9,458.7 A9.6,9.6 0 1 1 1612.5,458.7 L1603.2,474.7 Z" fill="#f9a11b" stroke="#111" stroke-width="1.1"/><circle cx="1603.2" cy="456.2" r="6.6" fill="#fff" stroke="#111" stroke-width="0.9"/><text x="1603.2" y="459.8" font-size="10" fill="#111" text-anchor="middle" font-family="Liberation Serif, serif">9</text><circle cx="1419" cy="842" r="11.5" fill="#000" stroke="#1d6262" stroke-width="4"/><text x="1419" y="848" font-size="16" fill="#fff" text-anchor="middle" font-family="Liberation Serif, serif">D</text><rect x="1482.8" y="531.5" width="159" height="124" rx="3" fill="#000"/><text x="1491" y="553" font-size="12" font-weight="bold" fill="#fff">Drag Order Releases</text><text x="1491" y="577.5" font-size="10" fill="#fff">DYN-DAY-027-001</text><rect x="1491" y="593" width="118.7" height="1.6" fill="#bdbdbd"/><text x="1491" y="618" font-size="12" font-weight="bold" fill="#fff">Drop to Shipment</text><text x="1491" y="641.8" font-size="10" fill="#fff">02454</text><g transform="translate(1625.5 669) scale(1.2)"><path d="M0,-11 L4,-6 H1.5 V-1.5 H6 V-4 L11,0 L6,4 V1.5 H1.5 V6 H4 L0,11 L-4,6 H-1.5 V1.5 H-6 V4 L-11,0 L-6,-4 V-1.5 H-1.5 V-6 H-4 Z" fill="#fff" stroke="#111" stroke-width="1"/></g><circle cx="1890" cy="159" r="14" fill="#1e2226"/><path d="M1882.5,157 L1890,153 L1897.5,157 L1890,161 Z" fill="#fff"/><path d="M1883,161 L1890,165 L1897,161" fill="none" stroke="#fff" stroke-width="1.5"/><rect x="1876" y="567.5" width="28" height="66" rx="14" fill="#1e2226"/><path d="M1884.5,587.5 H1895.5 M1890,582 V593" stroke="#fff" stroke-width="2.2"/><path d="M1884.5,614 H1895.5" stroke="#fff" stroke-width="2.2"/><path d="M1818,1048 V1055 H1902 V1048" fill="none" stroke="#000" stroke-width="2"/><text x="1872" y="1052" font-size="10" font-weight="bold" fill="#000">5 km</text><rect x="1149" y="1042" width="0" height="0"/><text x="1157" y="1054" font-size="10" fill="#222">© 1987–2017 HERE | <tspan text-decoration="underline">Terms of use</tspan></text><text x="1160" y="1043" font-size="14" font-weight="bold" fill="#222" transform="rotate(-42 1160 1043)">here</text></g><path d="M1909,138.5 H1149.5 V1062.5 H1909" fill="none" stroke="#b9b9b9" stroke-width="1"/></svg><!--/MAP-->
</body></html>
